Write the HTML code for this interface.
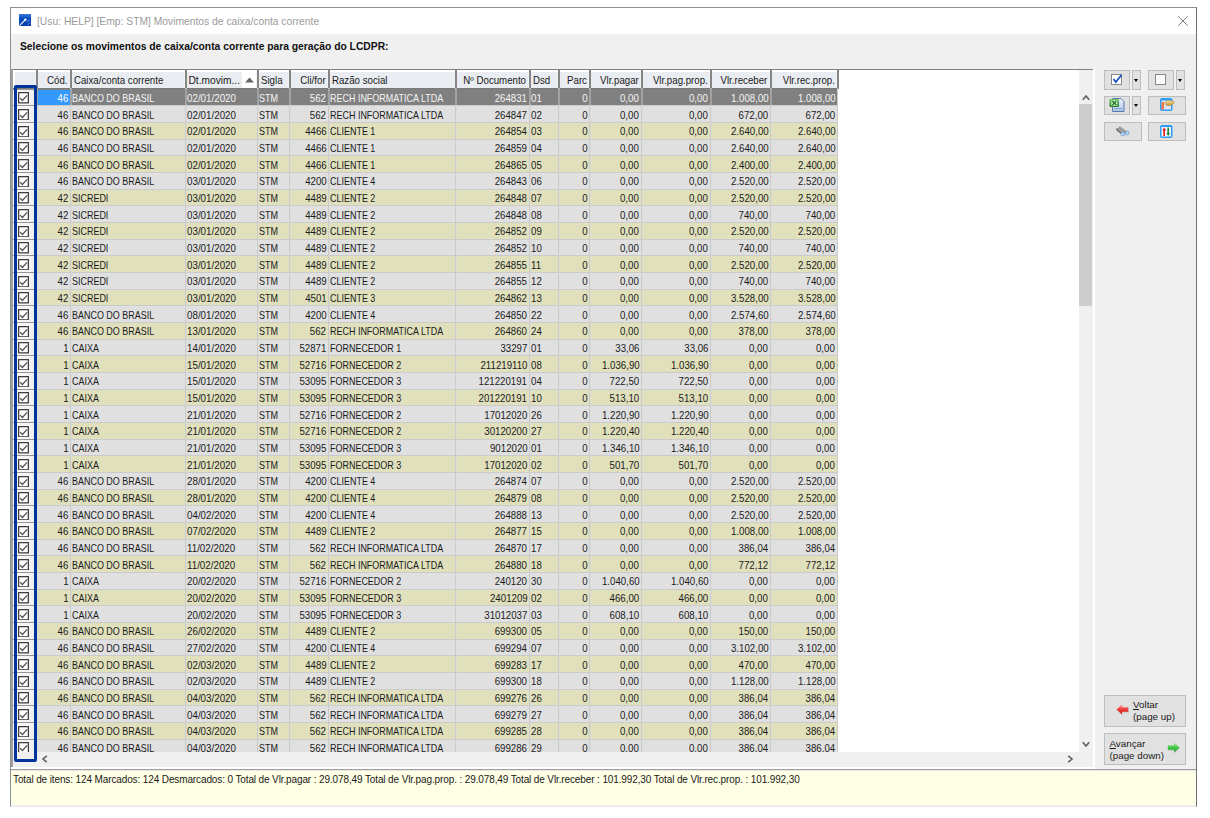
<!DOCTYPE html>
<html><head><meta charset="utf-8"><title>Movimentos</title>
<style>
*{box-sizing:border-box}
html,body{margin:0;padding:0}
body{width:1210px;height:818px;position:relative;overflow:hidden;background:#fff;font-family:"Liberation Sans",sans-serif;}
.a{position:absolute}
.t{position:absolute;white-space:nowrap;font-size:10.2px}
.t span{display:inline-block}
.btn{position:absolute;background:#e1e1e1;border:1px solid #bdbdbd}
.dd:after{content:"";position:absolute;left:50%;top:50%;margin-left:-3px;margin-top:-1.5px;border-left:2.5px solid transparent;border-right:2.5px solid transparent;border-top:3px solid #000}
</style></head><body>

<div class="a" style="left:10px;top:7px;width:1187px;height:800px;border-style:solid;border-width:1px;border-color:#8b9096 #707070 #e8e8e8 #8b9096;background:#f0f0f0"></div>
<div class="a" style="left:11px;top:8px;width:1185px;height:26px;background:#fff"></div>
<svg class="a" style="left:19px;top:14px" width="12" height="12" viewBox="0 0 12 12">
<defs><linearGradient id="gi" x1="0" y1="0" x2="0" y2="1"><stop offset="0" stop-color="#3a7ae0"/><stop offset="0.35" stop-color="#0a50c0"/><stop offset="1" stop-color="#003aa8"/></linearGradient></defs>
<path d="M0 0 H12 V12 H2 Q0 12 0 10 Z" fill="url(#gi)"/>
<path d="M1.3 10.8 L6.2 5.8" stroke="#fff" stroke-width="1.1"/><circle cx="6.4" cy="5.6" r="1.2" fill="#fff"/>
<path d="M8.2 8.2 L10.3 5.8 M8.6 11 L10.8 8.8" stroke="#8fb8ee" stroke-width="0.8"/>
</svg>
<div class="a" style="left:37px;top:16px;font-size:10.3px;line-height:12px;color:#9b9b9b;white-space:nowrap">[Usu: HELP] [Emp: STM] Movimentos de caixa/conta corrente</div>
<svg class="a" style="left:1178px;top:16px" width="10" height="10" viewBox="0 0 10 10"><path d="M0.3 0.3 L9.7 9.7 M9.7 0.3 L0.3 9.7" stroke="#7a7a7a" stroke-width="1"/></svg>
<div class="a" style="left:20px;top:41px;font-size:10.3px;line-height:12px;font-weight:bold;color:#111;white-space:nowrap">Selecione os movimentos de caixa/conta corrente para geração do LCDPR:</div>
<div class="a" style="left:11px;top:69px;width:1083px;height:1px;background:#828282"></div>
<div class="a" style="left:11px;top:69px;width:2px;height:699px;background:#a0a0a0"></div>
<div class="a" style="left:1093px;top:69px;width:2px;height:700px;background:#fff"></div>
<div class="a" style="left:11px;top:767px;width:1084px;height:2px;background:#fff"></div>
<div class="a" style="left:13px;top:70px;width:1066px;height:682px;background:#fff"></div>
<div class="a" style="left:13px;top:70px;width:825px;height:19px;background:#fff"></div>
<div class="a" style="left:14.5px;top:72px;width:21px;height:16px;background:#e9ecf0"></div>
<div class="a" style="left:35px;top:72px;width:1px;height:16px;background:#f2f2f2"></div>
<div class="a" style="left:36px;top:70px;width:1.5px;height:19px;background:#858585"></div>
<div class="a" style="left:37.5px;top:72px;width:32px;height:16px;background:#e9ecf0"></div>
<div class="a" style="left:69px;top:72px;width:1px;height:16px;background:#f2f2f2"></div>
<div class="a" style="left:70px;top:70px;width:1.5px;height:19px;background:#858585"></div>
<div class="a" style="left:71.5px;top:72px;width:113px;height:16px;background:#e9ecf0"></div>
<div class="a" style="left:184px;top:72px;width:1px;height:16px;background:#f2f2f2"></div>
<div class="a" style="left:185px;top:70px;width:1.5px;height:19px;background:#858585"></div>
<div class="a" style="left:186.5px;top:72px;width:70px;height:16px;background:#e9ecf0"></div>
<div class="a" style="left:256px;top:72px;width:1px;height:16px;background:#f2f2f2"></div>
<div class="a" style="left:257px;top:70px;width:1.5px;height:19px;background:#858585"></div>
<div class="a" style="left:258.5px;top:72px;width:30px;height:16px;background:#e9ecf0"></div>
<div class="a" style="left:288px;top:72px;width:1px;height:16px;background:#f2f2f2"></div>
<div class="a" style="left:289px;top:70px;width:1.5px;height:19px;background:#858585"></div>
<div class="a" style="left:290.5px;top:72px;width:37px;height:16px;background:#e9ecf0"></div>
<div class="a" style="left:327px;top:72px;width:1px;height:16px;background:#f2f2f2"></div>
<div class="a" style="left:328px;top:70px;width:1.5px;height:19px;background:#858585"></div>
<div class="a" style="left:329.5px;top:72px;width:125px;height:16px;background:#e9ecf0"></div>
<div class="a" style="left:454px;top:72px;width:1px;height:16px;background:#f2f2f2"></div>
<div class="a" style="left:455px;top:70px;width:1.5px;height:19px;background:#858585"></div>
<div class="a" style="left:456.5px;top:72px;width:72px;height:16px;background:#e9ecf0"></div>
<div class="a" style="left:528px;top:72px;width:1px;height:16px;background:#f2f2f2"></div>
<div class="a" style="left:529px;top:70px;width:1.5px;height:19px;background:#858585"></div>
<div class="a" style="left:530.5px;top:72px;width:27px;height:16px;background:#e9ecf0"></div>
<div class="a" style="left:557px;top:72px;width:1px;height:16px;background:#f2f2f2"></div>
<div class="a" style="left:558px;top:70px;width:1.5px;height:19px;background:#858585"></div>
<div class="a" style="left:559.5px;top:72px;width:29px;height:16px;background:#e9ecf0"></div>
<div class="a" style="left:588px;top:72px;width:1px;height:16px;background:#f2f2f2"></div>
<div class="a" style="left:589px;top:70px;width:1.5px;height:19px;background:#858585"></div>
<div class="a" style="left:590.5px;top:72px;width:50px;height:16px;background:#e9ecf0"></div>
<div class="a" style="left:640px;top:72px;width:1px;height:16px;background:#f2f2f2"></div>
<div class="a" style="left:641px;top:70px;width:1.5px;height:19px;background:#858585"></div>
<div class="a" style="left:642.5px;top:72px;width:67px;height:16px;background:#e9ecf0"></div>
<div class="a" style="left:709px;top:72px;width:1px;height:16px;background:#f2f2f2"></div>
<div class="a" style="left:710px;top:70px;width:1.5px;height:19px;background:#858585"></div>
<div class="a" style="left:711.5px;top:72px;width:58px;height:16px;background:#e9ecf0"></div>
<div class="a" style="left:769px;top:72px;width:1px;height:16px;background:#f2f2f2"></div>
<div class="a" style="left:770px;top:70px;width:1.5px;height:19px;background:#858585"></div>
<div class="a" style="left:771.5px;top:72px;width:65px;height:16px;background:#e9ecf0"></div>
<div class="a" style="left:836px;top:72px;width:1px;height:16px;background:#f2f2f2"></div>
<div class="a" style="left:837px;top:70px;width:1.5px;height:19px;background:#858585"></div>
<div class="a" style="left:13px;top:88px;width:825px;height:1px;background:#7a7a7a"></div>
<div class="a" style="left:242px;top:72px;width:14px;height:16px;background:#fff"></div>
<svg class="a" style="left:245px;top:77px" width="9" height="6" viewBox="0 0 9 6"><path d="M0 5.5 L4.5 0.5 L9 5.5 Z" fill="#666"/></svg>
<div class="t r" style="right:1142.5px;top:71px;height:18px;line-height:20px;color:#1a1a1a"><span style="transform:scaleX(0.95);transform-origin:100% 0">Cód.</span></div>
<div class="t" style="left:73.5px;top:71px;height:18px;line-height:20px;color:#1a1a1a"><span style="transform:scaleX(0.95);transform-origin:0 0">Caixa/conta corrente</span></div>
<div class="t" style="left:188.5px;top:71px;height:18px;line-height:20px;color:#1a1a1a"><span style="transform:scaleX(1.0);transform-origin:0 0">Dt.movim...</span></div>
<div class="t" style="left:260.5px;top:71px;height:18px;line-height:20px;color:#1a1a1a"><span style="transform:scaleX(0.95);transform-origin:0 0">Sigla</span></div>
<div class="t r" style="right:884.5px;top:71px;height:18px;line-height:20px;color:#1a1a1a"><span style="transform:scaleX(0.95);transform-origin:100% 0">Cli/for</span></div>
<div class="t" style="left:331.5px;top:71px;height:18px;line-height:20px;color:#1a1a1a"><span style="transform:scaleX(0.95);transform-origin:0 0">Razão social</span></div>
<div class="t r" style="right:683.5px;top:71px;height:18px;line-height:20px;color:#1a1a1a"><span style="transform:scaleX(0.95);transform-origin:100% 0">Nº Documento</span></div>
<div class="t" style="left:532.5px;top:71px;height:18px;line-height:20px;color:#1a1a1a"><span style="transform:scaleX(0.95);transform-origin:0 0">Dsd</span></div>
<div class="t r" style="right:623.5px;top:71px;height:18px;line-height:20px;color:#1a1a1a"><span style="transform:scaleX(0.95);transform-origin:100% 0">Parc</span></div>
<div class="t r" style="right:571.5px;top:71px;height:18px;line-height:20px;color:#1a1a1a"><span style="transform:scaleX(0.95);transform-origin:100% 0">Vlr.pagar</span></div>
<div class="t r" style="right:502.5px;top:71px;height:18px;line-height:20px;color:#1a1a1a"><span style="transform:scaleX(0.95);transform-origin:100% 0">Vlr.pag.prop.</span></div>
<div class="t r" style="right:442.5px;top:71px;height:18px;line-height:20px;color:#1a1a1a"><span style="transform:scaleX(0.95);transform-origin:100% 0">Vlr.receber</span></div>
<div class="t r" style="right:375.5px;top:71px;height:18px;line-height:20px;color:#1a1a1a"><span style="transform:scaleX(0.95);transform-origin:100% 0">Vlr.rec.prop.</span></div>
<div class="a" style="left:13px;top:88px;width:1066px;height:664px;overflow:hidden">
<div class="a" style="left:0;top:0.67px;width:23px;height:16.667px;background:linear-gradient(90deg,#fcfcfc,#eeeeee);border-top:1.3px solid #959595"></div>
<svg class="a" style="left:5px;top:4.27px" width="11" height="11.5" viewBox="0 0 11 11.5"><rect x="0.65" y="0.65" width="9.7" height="10.2" fill="#fff" stroke="#3c3c3c" stroke-width="1.25"/><path d="M2.1 6.1 L4.4 8.5 L9.1 3.4" fill="none" stroke="#4e4e4e" stroke-width="1.25"/></svg>
<div class="a" style="left:23px;top:0.67px;width:801px;height:16.667px;background:#808080;border-top:1px solid #808080"></div>
<div class="a" style="left:23px;top:1.67px;width:34px;height:15.667px;background:#3399ff"></div>
<div class="t r" style="right:1010.7px;top:2.87px;height:16px;line-height:16px;color:#fff"><span style="transform:scaleX(0.95);transform-origin:100% 0">46</span></div>
<div class="t" style="left:59px;top:2.87px;height:16px;line-height:16px;color:#f4f4f4"><span style="transform:scaleX(0.88);transform-origin:0 0">BANCO DO BRASIL</span></div>
<div class="t" style="left:174px;top:2.87px;height:16px;line-height:16px;color:#f4f4f4"><span style="transform:scaleX(0.96);transform-origin:0 0">02/01/2020</span></div>
<div class="t" style="left:246px;top:2.87px;height:16px;line-height:16px;color:#f4f4f4"><span style="transform:scaleX(0.88);transform-origin:0 0">STM</span></div>
<div class="t r" style="right:752.7px;top:2.87px;height:16px;line-height:16px;color:#f4f4f4"><span style="transform:scaleX(0.95);transform-origin:100% 0">562</span></div>
<div class="t" style="left:317px;top:2.87px;height:16px;line-height:16px;color:#f4f4f4"><span style="transform:scaleX(0.88);transform-origin:0 0">RECH INFORMATICA LTDA</span></div>
<div class="t r" style="right:551.7px;top:2.87px;height:16px;line-height:16px;color:#f4f4f4"><span style="transform:scaleX(0.95);transform-origin:100% 0">264831</span></div>
<div class="t" style="left:518px;top:2.87px;height:16px;line-height:16px;color:#f4f4f4"><span style="transform:scaleX(0.95);transform-origin:0 0">01</span></div>
<div class="t r" style="right:491.70000000000005px;top:2.87px;height:16px;line-height:16px;color:#f4f4f4"><span style="transform:scaleX(0.95);transform-origin:100% 0">0</span></div>
<div class="t r" style="right:439.70000000000005px;top:2.87px;height:16px;line-height:16px;color:#f4f4f4"><span style="transform:scaleX(0.95);transform-origin:100% 0">0,00</span></div>
<div class="t r" style="right:370.70000000000005px;top:2.87px;height:16px;line-height:16px;color:#f4f4f4"><span style="transform:scaleX(0.95);transform-origin:100% 0">0,00</span></div>
<div class="t r" style="right:310.70000000000005px;top:2.87px;height:16px;line-height:16px;color:#f4f4f4"><span style="transform:scaleX(0.95);transform-origin:100% 0">1.008,00</span></div>
<div class="t r" style="right:243.70000000000005px;top:2.87px;height:16px;line-height:16px;color:#f4f4f4"><span style="transform:scaleX(0.95);transform-origin:100% 0">1.008,00</span></div>
<div class="a" style="left:0;top:17.34px;width:23px;height:16.667px;background:linear-gradient(90deg,#fcfcfc,#eeeeee);border-top:1.3px solid #959595"></div>
<svg class="a" style="left:5px;top:20.94px" width="11" height="11.5" viewBox="0 0 11 11.5"><rect x="0.65" y="0.65" width="9.7" height="10.2" fill="#fff" stroke="#3c3c3c" stroke-width="1.25"/><path d="M2.1 6.1 L4.4 8.5 L9.1 3.4" fill="none" stroke="#4e4e4e" stroke-width="1.25"/></svg>
<div class="a" style="left:23px;top:17.34px;width:801px;height:16.667px;background:#e0e0e0;border-top:1px solid #cbcbcb"></div>
<div class="t r" style="right:1010.7px;top:19.54px;height:16px;line-height:16px;color:#1a1a1a"><span style="transform:scaleX(0.95);transform-origin:100% 0">46</span></div>
<div class="t" style="left:59px;top:19.54px;height:16px;line-height:16px;color:#1a1a1a"><span style="transform:scaleX(0.88);transform-origin:0 0">BANCO DO BRASIL</span></div>
<div class="t" style="left:174px;top:19.54px;height:16px;line-height:16px;color:#1a1a1a"><span style="transform:scaleX(0.96);transform-origin:0 0">02/01/2020</span></div>
<div class="t" style="left:246px;top:19.54px;height:16px;line-height:16px;color:#1a1a1a"><span style="transform:scaleX(0.88);transform-origin:0 0">STM</span></div>
<div class="t r" style="right:752.7px;top:19.54px;height:16px;line-height:16px;color:#1a1a1a"><span style="transform:scaleX(0.95);transform-origin:100% 0">562</span></div>
<div class="t" style="left:317px;top:19.54px;height:16px;line-height:16px;color:#1a1a1a"><span style="transform:scaleX(0.88);transform-origin:0 0">RECH INFORMATICA LTDA</span></div>
<div class="t r" style="right:551.7px;top:19.54px;height:16px;line-height:16px;color:#1a1a1a"><span style="transform:scaleX(0.95);transform-origin:100% 0">264847</span></div>
<div class="t" style="left:518px;top:19.54px;height:16px;line-height:16px;color:#1a1a1a"><span style="transform:scaleX(0.95);transform-origin:0 0">02</span></div>
<div class="t r" style="right:491.70000000000005px;top:19.54px;height:16px;line-height:16px;color:#1a1a1a"><span style="transform:scaleX(0.95);transform-origin:100% 0">0</span></div>
<div class="t r" style="right:439.70000000000005px;top:19.54px;height:16px;line-height:16px;color:#1a1a1a"><span style="transform:scaleX(0.95);transform-origin:100% 0">0,00</span></div>
<div class="t r" style="right:370.70000000000005px;top:19.54px;height:16px;line-height:16px;color:#1a1a1a"><span style="transform:scaleX(0.95);transform-origin:100% 0">0,00</span></div>
<div class="t r" style="right:310.70000000000005px;top:19.54px;height:16px;line-height:16px;color:#1a1a1a"><span style="transform:scaleX(0.95);transform-origin:100% 0">672,00</span></div>
<div class="t r" style="right:243.70000000000005px;top:19.54px;height:16px;line-height:16px;color:#1a1a1a"><span style="transform:scaleX(0.95);transform-origin:100% 0">672,00</span></div>
<div class="a" style="left:0;top:34.00px;width:23px;height:16.667px;background:linear-gradient(90deg,#fcfcfc,#eeeeee);border-top:1.3px solid #959595"></div>
<svg class="a" style="left:5px;top:37.60px" width="11" height="11.5" viewBox="0 0 11 11.5"><rect x="0.65" y="0.65" width="9.7" height="10.2" fill="#fff" stroke="#3c3c3c" stroke-width="1.25"/><path d="M2.1 6.1 L4.4 8.5 L9.1 3.4" fill="none" stroke="#4e4e4e" stroke-width="1.25"/></svg>
<div class="a" style="left:23px;top:34.00px;width:801px;height:16.667px;background:#e0e0bc;border-top:1px solid #cbcbcb"></div>
<div class="t r" style="right:1010.7px;top:36.20px;height:16px;line-height:16px;color:#1a1a1a"><span style="transform:scaleX(0.95);transform-origin:100% 0">46</span></div>
<div class="t" style="left:59px;top:36.20px;height:16px;line-height:16px;color:#1a1a1a"><span style="transform:scaleX(0.88);transform-origin:0 0">BANCO DO BRASIL</span></div>
<div class="t" style="left:174px;top:36.20px;height:16px;line-height:16px;color:#1a1a1a"><span style="transform:scaleX(0.96);transform-origin:0 0">02/01/2020</span></div>
<div class="t" style="left:246px;top:36.20px;height:16px;line-height:16px;color:#1a1a1a"><span style="transform:scaleX(0.88);transform-origin:0 0">STM</span></div>
<div class="t r" style="right:752.7px;top:36.20px;height:16px;line-height:16px;color:#1a1a1a"><span style="transform:scaleX(0.95);transform-origin:100% 0">4466</span></div>
<div class="t" style="left:317px;top:36.20px;height:16px;line-height:16px;color:#1a1a1a"><span style="transform:scaleX(0.88);transform-origin:0 0">CLIENTE 1</span></div>
<div class="t r" style="right:551.7px;top:36.20px;height:16px;line-height:16px;color:#1a1a1a"><span style="transform:scaleX(0.95);transform-origin:100% 0">264854</span></div>
<div class="t" style="left:518px;top:36.20px;height:16px;line-height:16px;color:#1a1a1a"><span style="transform:scaleX(0.95);transform-origin:0 0">03</span></div>
<div class="t r" style="right:491.70000000000005px;top:36.20px;height:16px;line-height:16px;color:#1a1a1a"><span style="transform:scaleX(0.95);transform-origin:100% 0">0</span></div>
<div class="t r" style="right:439.70000000000005px;top:36.20px;height:16px;line-height:16px;color:#1a1a1a"><span style="transform:scaleX(0.95);transform-origin:100% 0">0,00</span></div>
<div class="t r" style="right:370.70000000000005px;top:36.20px;height:16px;line-height:16px;color:#1a1a1a"><span style="transform:scaleX(0.95);transform-origin:100% 0">0,00</span></div>
<div class="t r" style="right:310.70000000000005px;top:36.20px;height:16px;line-height:16px;color:#1a1a1a"><span style="transform:scaleX(0.95);transform-origin:100% 0">2.640,00</span></div>
<div class="t r" style="right:243.70000000000005px;top:36.20px;height:16px;line-height:16px;color:#1a1a1a"><span style="transform:scaleX(0.95);transform-origin:100% 0">2.640,00</span></div>
<div class="a" style="left:0;top:50.67px;width:23px;height:16.667px;background:linear-gradient(90deg,#fcfcfc,#eeeeee);border-top:1.3px solid #959595"></div>
<svg class="a" style="left:5px;top:54.27px" width="11" height="11.5" viewBox="0 0 11 11.5"><rect x="0.65" y="0.65" width="9.7" height="10.2" fill="#fff" stroke="#3c3c3c" stroke-width="1.25"/><path d="M2.1 6.1 L4.4 8.5 L9.1 3.4" fill="none" stroke="#4e4e4e" stroke-width="1.25"/></svg>
<div class="a" style="left:23px;top:50.67px;width:801px;height:16.667px;background:#e0e0e0;border-top:1px solid #cbcbcb"></div>
<div class="t r" style="right:1010.7px;top:52.87px;height:16px;line-height:16px;color:#1a1a1a"><span style="transform:scaleX(0.95);transform-origin:100% 0">46</span></div>
<div class="t" style="left:59px;top:52.87px;height:16px;line-height:16px;color:#1a1a1a"><span style="transform:scaleX(0.88);transform-origin:0 0">BANCO DO BRASIL</span></div>
<div class="t" style="left:174px;top:52.87px;height:16px;line-height:16px;color:#1a1a1a"><span style="transform:scaleX(0.96);transform-origin:0 0">02/01/2020</span></div>
<div class="t" style="left:246px;top:52.87px;height:16px;line-height:16px;color:#1a1a1a"><span style="transform:scaleX(0.88);transform-origin:0 0">STM</span></div>
<div class="t r" style="right:752.7px;top:52.87px;height:16px;line-height:16px;color:#1a1a1a"><span style="transform:scaleX(0.95);transform-origin:100% 0">4466</span></div>
<div class="t" style="left:317px;top:52.87px;height:16px;line-height:16px;color:#1a1a1a"><span style="transform:scaleX(0.88);transform-origin:0 0">CLIENTE 1</span></div>
<div class="t r" style="right:551.7px;top:52.87px;height:16px;line-height:16px;color:#1a1a1a"><span style="transform:scaleX(0.95);transform-origin:100% 0">264859</span></div>
<div class="t" style="left:518px;top:52.87px;height:16px;line-height:16px;color:#1a1a1a"><span style="transform:scaleX(0.95);transform-origin:0 0">04</span></div>
<div class="t r" style="right:491.70000000000005px;top:52.87px;height:16px;line-height:16px;color:#1a1a1a"><span style="transform:scaleX(0.95);transform-origin:100% 0">0</span></div>
<div class="t r" style="right:439.70000000000005px;top:52.87px;height:16px;line-height:16px;color:#1a1a1a"><span style="transform:scaleX(0.95);transform-origin:100% 0">0,00</span></div>
<div class="t r" style="right:370.70000000000005px;top:52.87px;height:16px;line-height:16px;color:#1a1a1a"><span style="transform:scaleX(0.95);transform-origin:100% 0">0,00</span></div>
<div class="t r" style="right:310.70000000000005px;top:52.87px;height:16px;line-height:16px;color:#1a1a1a"><span style="transform:scaleX(0.95);transform-origin:100% 0">2.640,00</span></div>
<div class="t r" style="right:243.70000000000005px;top:52.87px;height:16px;line-height:16px;color:#1a1a1a"><span style="transform:scaleX(0.95);transform-origin:100% 0">2.640,00</span></div>
<div class="a" style="left:0;top:67.34px;width:23px;height:16.667px;background:linear-gradient(90deg,#fcfcfc,#eeeeee);border-top:1.3px solid #959595"></div>
<svg class="a" style="left:5px;top:70.94px" width="11" height="11.5" viewBox="0 0 11 11.5"><rect x="0.65" y="0.65" width="9.7" height="10.2" fill="#fff" stroke="#3c3c3c" stroke-width="1.25"/><path d="M2.1 6.1 L4.4 8.5 L9.1 3.4" fill="none" stroke="#4e4e4e" stroke-width="1.25"/></svg>
<div class="a" style="left:23px;top:67.34px;width:801px;height:16.667px;background:#e0e0bc;border-top:1px solid #cbcbcb"></div>
<div class="t r" style="right:1010.7px;top:69.54px;height:16px;line-height:16px;color:#1a1a1a"><span style="transform:scaleX(0.95);transform-origin:100% 0">46</span></div>
<div class="t" style="left:59px;top:69.54px;height:16px;line-height:16px;color:#1a1a1a"><span style="transform:scaleX(0.88);transform-origin:0 0">BANCO DO BRASIL</span></div>
<div class="t" style="left:174px;top:69.54px;height:16px;line-height:16px;color:#1a1a1a"><span style="transform:scaleX(0.96);transform-origin:0 0">02/01/2020</span></div>
<div class="t" style="left:246px;top:69.54px;height:16px;line-height:16px;color:#1a1a1a"><span style="transform:scaleX(0.88);transform-origin:0 0">STM</span></div>
<div class="t r" style="right:752.7px;top:69.54px;height:16px;line-height:16px;color:#1a1a1a"><span style="transform:scaleX(0.95);transform-origin:100% 0">4466</span></div>
<div class="t" style="left:317px;top:69.54px;height:16px;line-height:16px;color:#1a1a1a"><span style="transform:scaleX(0.88);transform-origin:0 0">CLIENTE 1</span></div>
<div class="t r" style="right:551.7px;top:69.54px;height:16px;line-height:16px;color:#1a1a1a"><span style="transform:scaleX(0.95);transform-origin:100% 0">264865</span></div>
<div class="t" style="left:518px;top:69.54px;height:16px;line-height:16px;color:#1a1a1a"><span style="transform:scaleX(0.95);transform-origin:0 0">05</span></div>
<div class="t r" style="right:491.70000000000005px;top:69.54px;height:16px;line-height:16px;color:#1a1a1a"><span style="transform:scaleX(0.95);transform-origin:100% 0">0</span></div>
<div class="t r" style="right:439.70000000000005px;top:69.54px;height:16px;line-height:16px;color:#1a1a1a"><span style="transform:scaleX(0.95);transform-origin:100% 0">0,00</span></div>
<div class="t r" style="right:370.70000000000005px;top:69.54px;height:16px;line-height:16px;color:#1a1a1a"><span style="transform:scaleX(0.95);transform-origin:100% 0">0,00</span></div>
<div class="t r" style="right:310.70000000000005px;top:69.54px;height:16px;line-height:16px;color:#1a1a1a"><span style="transform:scaleX(0.95);transform-origin:100% 0">2.400,00</span></div>
<div class="t r" style="right:243.70000000000005px;top:69.54px;height:16px;line-height:16px;color:#1a1a1a"><span style="transform:scaleX(0.95);transform-origin:100% 0">2.400,00</span></div>
<div class="a" style="left:0;top:84.00px;width:23px;height:16.667px;background:linear-gradient(90deg,#fcfcfc,#eeeeee);border-top:1.3px solid #959595"></div>
<svg class="a" style="left:5px;top:87.60px" width="11" height="11.5" viewBox="0 0 11 11.5"><rect x="0.65" y="0.65" width="9.7" height="10.2" fill="#fff" stroke="#3c3c3c" stroke-width="1.25"/><path d="M2.1 6.1 L4.4 8.5 L9.1 3.4" fill="none" stroke="#4e4e4e" stroke-width="1.25"/></svg>
<div class="a" style="left:23px;top:84.00px;width:801px;height:16.667px;background:#e0e0e0;border-top:1px solid #cbcbcb"></div>
<div class="t r" style="right:1010.7px;top:86.20px;height:16px;line-height:16px;color:#1a1a1a"><span style="transform:scaleX(0.95);transform-origin:100% 0">46</span></div>
<div class="t" style="left:59px;top:86.20px;height:16px;line-height:16px;color:#1a1a1a"><span style="transform:scaleX(0.88);transform-origin:0 0">BANCO DO BRASIL</span></div>
<div class="t" style="left:174px;top:86.20px;height:16px;line-height:16px;color:#1a1a1a"><span style="transform:scaleX(0.96);transform-origin:0 0">03/01/2020</span></div>
<div class="t" style="left:246px;top:86.20px;height:16px;line-height:16px;color:#1a1a1a"><span style="transform:scaleX(0.88);transform-origin:0 0">STM</span></div>
<div class="t r" style="right:752.7px;top:86.20px;height:16px;line-height:16px;color:#1a1a1a"><span style="transform:scaleX(0.95);transform-origin:100% 0">4200</span></div>
<div class="t" style="left:317px;top:86.20px;height:16px;line-height:16px;color:#1a1a1a"><span style="transform:scaleX(0.88);transform-origin:0 0">CLIENTE 4</span></div>
<div class="t r" style="right:551.7px;top:86.20px;height:16px;line-height:16px;color:#1a1a1a"><span style="transform:scaleX(0.95);transform-origin:100% 0">264843</span></div>
<div class="t" style="left:518px;top:86.20px;height:16px;line-height:16px;color:#1a1a1a"><span style="transform:scaleX(0.95);transform-origin:0 0">06</span></div>
<div class="t r" style="right:491.70000000000005px;top:86.20px;height:16px;line-height:16px;color:#1a1a1a"><span style="transform:scaleX(0.95);transform-origin:100% 0">0</span></div>
<div class="t r" style="right:439.70000000000005px;top:86.20px;height:16px;line-height:16px;color:#1a1a1a"><span style="transform:scaleX(0.95);transform-origin:100% 0">0,00</span></div>
<div class="t r" style="right:370.70000000000005px;top:86.20px;height:16px;line-height:16px;color:#1a1a1a"><span style="transform:scaleX(0.95);transform-origin:100% 0">0,00</span></div>
<div class="t r" style="right:310.70000000000005px;top:86.20px;height:16px;line-height:16px;color:#1a1a1a"><span style="transform:scaleX(0.95);transform-origin:100% 0">2.520,00</span></div>
<div class="t r" style="right:243.70000000000005px;top:86.20px;height:16px;line-height:16px;color:#1a1a1a"><span style="transform:scaleX(0.95);transform-origin:100% 0">2.520,00</span></div>
<div class="a" style="left:0;top:100.67px;width:23px;height:16.667px;background:linear-gradient(90deg,#fcfcfc,#eeeeee);border-top:1.3px solid #959595"></div>
<svg class="a" style="left:5px;top:104.27px" width="11" height="11.5" viewBox="0 0 11 11.5"><rect x="0.65" y="0.65" width="9.7" height="10.2" fill="#fff" stroke="#3c3c3c" stroke-width="1.25"/><path d="M2.1 6.1 L4.4 8.5 L9.1 3.4" fill="none" stroke="#4e4e4e" stroke-width="1.25"/></svg>
<div class="a" style="left:23px;top:100.67px;width:801px;height:16.667px;background:#e0e0bc;border-top:1px solid #cbcbcb"></div>
<div class="t r" style="right:1010.7px;top:102.87px;height:16px;line-height:16px;color:#1a1a1a"><span style="transform:scaleX(0.95);transform-origin:100% 0">42</span></div>
<div class="t" style="left:59px;top:102.87px;height:16px;line-height:16px;color:#1a1a1a"><span style="transform:scaleX(0.88);transform-origin:0 0">SICREDI</span></div>
<div class="t" style="left:174px;top:102.87px;height:16px;line-height:16px;color:#1a1a1a"><span style="transform:scaleX(0.96);transform-origin:0 0">03/01/2020</span></div>
<div class="t" style="left:246px;top:102.87px;height:16px;line-height:16px;color:#1a1a1a"><span style="transform:scaleX(0.88);transform-origin:0 0">STM</span></div>
<div class="t r" style="right:752.7px;top:102.87px;height:16px;line-height:16px;color:#1a1a1a"><span style="transform:scaleX(0.95);transform-origin:100% 0">4489</span></div>
<div class="t" style="left:317px;top:102.87px;height:16px;line-height:16px;color:#1a1a1a"><span style="transform:scaleX(0.88);transform-origin:0 0">CLIENTE 2</span></div>
<div class="t r" style="right:551.7px;top:102.87px;height:16px;line-height:16px;color:#1a1a1a"><span style="transform:scaleX(0.95);transform-origin:100% 0">264848</span></div>
<div class="t" style="left:518px;top:102.87px;height:16px;line-height:16px;color:#1a1a1a"><span style="transform:scaleX(0.95);transform-origin:0 0">07</span></div>
<div class="t r" style="right:491.70000000000005px;top:102.87px;height:16px;line-height:16px;color:#1a1a1a"><span style="transform:scaleX(0.95);transform-origin:100% 0">0</span></div>
<div class="t r" style="right:439.70000000000005px;top:102.87px;height:16px;line-height:16px;color:#1a1a1a"><span style="transform:scaleX(0.95);transform-origin:100% 0">0,00</span></div>
<div class="t r" style="right:370.70000000000005px;top:102.87px;height:16px;line-height:16px;color:#1a1a1a"><span style="transform:scaleX(0.95);transform-origin:100% 0">0,00</span></div>
<div class="t r" style="right:310.70000000000005px;top:102.87px;height:16px;line-height:16px;color:#1a1a1a"><span style="transform:scaleX(0.95);transform-origin:100% 0">2.520,00</span></div>
<div class="t r" style="right:243.70000000000005px;top:102.87px;height:16px;line-height:16px;color:#1a1a1a"><span style="transform:scaleX(0.95);transform-origin:100% 0">2.520,00</span></div>
<div class="a" style="left:0;top:117.34px;width:23px;height:16.667px;background:linear-gradient(90deg,#fcfcfc,#eeeeee);border-top:1.3px solid #959595"></div>
<svg class="a" style="left:5px;top:120.94px" width="11" height="11.5" viewBox="0 0 11 11.5"><rect x="0.65" y="0.65" width="9.7" height="10.2" fill="#fff" stroke="#3c3c3c" stroke-width="1.25"/><path d="M2.1 6.1 L4.4 8.5 L9.1 3.4" fill="none" stroke="#4e4e4e" stroke-width="1.25"/></svg>
<div class="a" style="left:23px;top:117.34px;width:801px;height:16.667px;background:#e0e0e0;border-top:1px solid #cbcbcb"></div>
<div class="t r" style="right:1010.7px;top:119.54px;height:16px;line-height:16px;color:#1a1a1a"><span style="transform:scaleX(0.95);transform-origin:100% 0">42</span></div>
<div class="t" style="left:59px;top:119.54px;height:16px;line-height:16px;color:#1a1a1a"><span style="transform:scaleX(0.88);transform-origin:0 0">SICREDI</span></div>
<div class="t" style="left:174px;top:119.54px;height:16px;line-height:16px;color:#1a1a1a"><span style="transform:scaleX(0.96);transform-origin:0 0">03/01/2020</span></div>
<div class="t" style="left:246px;top:119.54px;height:16px;line-height:16px;color:#1a1a1a"><span style="transform:scaleX(0.88);transform-origin:0 0">STM</span></div>
<div class="t r" style="right:752.7px;top:119.54px;height:16px;line-height:16px;color:#1a1a1a"><span style="transform:scaleX(0.95);transform-origin:100% 0">4489</span></div>
<div class="t" style="left:317px;top:119.54px;height:16px;line-height:16px;color:#1a1a1a"><span style="transform:scaleX(0.88);transform-origin:0 0">CLIENTE 2</span></div>
<div class="t r" style="right:551.7px;top:119.54px;height:16px;line-height:16px;color:#1a1a1a"><span style="transform:scaleX(0.95);transform-origin:100% 0">264848</span></div>
<div class="t" style="left:518px;top:119.54px;height:16px;line-height:16px;color:#1a1a1a"><span style="transform:scaleX(0.95);transform-origin:0 0">08</span></div>
<div class="t r" style="right:491.70000000000005px;top:119.54px;height:16px;line-height:16px;color:#1a1a1a"><span style="transform:scaleX(0.95);transform-origin:100% 0">0</span></div>
<div class="t r" style="right:439.70000000000005px;top:119.54px;height:16px;line-height:16px;color:#1a1a1a"><span style="transform:scaleX(0.95);transform-origin:100% 0">0,00</span></div>
<div class="t r" style="right:370.70000000000005px;top:119.54px;height:16px;line-height:16px;color:#1a1a1a"><span style="transform:scaleX(0.95);transform-origin:100% 0">0,00</span></div>
<div class="t r" style="right:310.70000000000005px;top:119.54px;height:16px;line-height:16px;color:#1a1a1a"><span style="transform:scaleX(0.95);transform-origin:100% 0">740,00</span></div>
<div class="t r" style="right:243.70000000000005px;top:119.54px;height:16px;line-height:16px;color:#1a1a1a"><span style="transform:scaleX(0.95);transform-origin:100% 0">740,00</span></div>
<div class="a" style="left:0;top:134.01px;width:23px;height:16.667px;background:linear-gradient(90deg,#fcfcfc,#eeeeee);border-top:1.3px solid #959595"></div>
<svg class="a" style="left:5px;top:137.61px" width="11" height="11.5" viewBox="0 0 11 11.5"><rect x="0.65" y="0.65" width="9.7" height="10.2" fill="#fff" stroke="#3c3c3c" stroke-width="1.25"/><path d="M2.1 6.1 L4.4 8.5 L9.1 3.4" fill="none" stroke="#4e4e4e" stroke-width="1.25"/></svg>
<div class="a" style="left:23px;top:134.01px;width:801px;height:16.667px;background:#e0e0bc;border-top:1px solid #cbcbcb"></div>
<div class="t r" style="right:1010.7px;top:136.21px;height:16px;line-height:16px;color:#1a1a1a"><span style="transform:scaleX(0.95);transform-origin:100% 0">42</span></div>
<div class="t" style="left:59px;top:136.21px;height:16px;line-height:16px;color:#1a1a1a"><span style="transform:scaleX(0.88);transform-origin:0 0">SICREDI</span></div>
<div class="t" style="left:174px;top:136.21px;height:16px;line-height:16px;color:#1a1a1a"><span style="transform:scaleX(0.96);transform-origin:0 0">03/01/2020</span></div>
<div class="t" style="left:246px;top:136.21px;height:16px;line-height:16px;color:#1a1a1a"><span style="transform:scaleX(0.88);transform-origin:0 0">STM</span></div>
<div class="t r" style="right:752.7px;top:136.21px;height:16px;line-height:16px;color:#1a1a1a"><span style="transform:scaleX(0.95);transform-origin:100% 0">4489</span></div>
<div class="t" style="left:317px;top:136.21px;height:16px;line-height:16px;color:#1a1a1a"><span style="transform:scaleX(0.88);transform-origin:0 0">CLIENTE 2</span></div>
<div class="t r" style="right:551.7px;top:136.21px;height:16px;line-height:16px;color:#1a1a1a"><span style="transform:scaleX(0.95);transform-origin:100% 0">264852</span></div>
<div class="t" style="left:518px;top:136.21px;height:16px;line-height:16px;color:#1a1a1a"><span style="transform:scaleX(0.95);transform-origin:0 0">09</span></div>
<div class="t r" style="right:491.70000000000005px;top:136.21px;height:16px;line-height:16px;color:#1a1a1a"><span style="transform:scaleX(0.95);transform-origin:100% 0">0</span></div>
<div class="t r" style="right:439.70000000000005px;top:136.21px;height:16px;line-height:16px;color:#1a1a1a"><span style="transform:scaleX(0.95);transform-origin:100% 0">0,00</span></div>
<div class="t r" style="right:370.70000000000005px;top:136.21px;height:16px;line-height:16px;color:#1a1a1a"><span style="transform:scaleX(0.95);transform-origin:100% 0">0,00</span></div>
<div class="t r" style="right:310.70000000000005px;top:136.21px;height:16px;line-height:16px;color:#1a1a1a"><span style="transform:scaleX(0.95);transform-origin:100% 0">2.520,00</span></div>
<div class="t r" style="right:243.70000000000005px;top:136.21px;height:16px;line-height:16px;color:#1a1a1a"><span style="transform:scaleX(0.95);transform-origin:100% 0">2.520,00</span></div>
<div class="a" style="left:0;top:150.67px;width:23px;height:16.667px;background:linear-gradient(90deg,#fcfcfc,#eeeeee);border-top:1.3px solid #959595"></div>
<svg class="a" style="left:5px;top:154.27px" width="11" height="11.5" viewBox="0 0 11 11.5"><rect x="0.65" y="0.65" width="9.7" height="10.2" fill="#fff" stroke="#3c3c3c" stroke-width="1.25"/><path d="M2.1 6.1 L4.4 8.5 L9.1 3.4" fill="none" stroke="#4e4e4e" stroke-width="1.25"/></svg>
<div class="a" style="left:23px;top:150.67px;width:801px;height:16.667px;background:#e0e0e0;border-top:1px solid #cbcbcb"></div>
<div class="t r" style="right:1010.7px;top:152.87px;height:16px;line-height:16px;color:#1a1a1a"><span style="transform:scaleX(0.95);transform-origin:100% 0">42</span></div>
<div class="t" style="left:59px;top:152.87px;height:16px;line-height:16px;color:#1a1a1a"><span style="transform:scaleX(0.88);transform-origin:0 0">SICREDI</span></div>
<div class="t" style="left:174px;top:152.87px;height:16px;line-height:16px;color:#1a1a1a"><span style="transform:scaleX(0.96);transform-origin:0 0">03/01/2020</span></div>
<div class="t" style="left:246px;top:152.87px;height:16px;line-height:16px;color:#1a1a1a"><span style="transform:scaleX(0.88);transform-origin:0 0">STM</span></div>
<div class="t r" style="right:752.7px;top:152.87px;height:16px;line-height:16px;color:#1a1a1a"><span style="transform:scaleX(0.95);transform-origin:100% 0">4489</span></div>
<div class="t" style="left:317px;top:152.87px;height:16px;line-height:16px;color:#1a1a1a"><span style="transform:scaleX(0.88);transform-origin:0 0">CLIENTE 2</span></div>
<div class="t r" style="right:551.7px;top:152.87px;height:16px;line-height:16px;color:#1a1a1a"><span style="transform:scaleX(0.95);transform-origin:100% 0">264852</span></div>
<div class="t" style="left:518px;top:152.87px;height:16px;line-height:16px;color:#1a1a1a"><span style="transform:scaleX(0.95);transform-origin:0 0">10</span></div>
<div class="t r" style="right:491.70000000000005px;top:152.87px;height:16px;line-height:16px;color:#1a1a1a"><span style="transform:scaleX(0.95);transform-origin:100% 0">0</span></div>
<div class="t r" style="right:439.70000000000005px;top:152.87px;height:16px;line-height:16px;color:#1a1a1a"><span style="transform:scaleX(0.95);transform-origin:100% 0">0,00</span></div>
<div class="t r" style="right:370.70000000000005px;top:152.87px;height:16px;line-height:16px;color:#1a1a1a"><span style="transform:scaleX(0.95);transform-origin:100% 0">0,00</span></div>
<div class="t r" style="right:310.70000000000005px;top:152.87px;height:16px;line-height:16px;color:#1a1a1a"><span style="transform:scaleX(0.95);transform-origin:100% 0">740,00</span></div>
<div class="t r" style="right:243.70000000000005px;top:152.87px;height:16px;line-height:16px;color:#1a1a1a"><span style="transform:scaleX(0.95);transform-origin:100% 0">740,00</span></div>
<div class="a" style="left:0;top:167.34px;width:23px;height:16.667px;background:linear-gradient(90deg,#fcfcfc,#eeeeee);border-top:1.3px solid #959595"></div>
<svg class="a" style="left:5px;top:170.94px" width="11" height="11.5" viewBox="0 0 11 11.5"><rect x="0.65" y="0.65" width="9.7" height="10.2" fill="#fff" stroke="#3c3c3c" stroke-width="1.25"/><path d="M2.1 6.1 L4.4 8.5 L9.1 3.4" fill="none" stroke="#4e4e4e" stroke-width="1.25"/></svg>
<div class="a" style="left:23px;top:167.34px;width:801px;height:16.667px;background:#e0e0bc;border-top:1px solid #cbcbcb"></div>
<div class="t r" style="right:1010.7px;top:169.54px;height:16px;line-height:16px;color:#1a1a1a"><span style="transform:scaleX(0.95);transform-origin:100% 0">42</span></div>
<div class="t" style="left:59px;top:169.54px;height:16px;line-height:16px;color:#1a1a1a"><span style="transform:scaleX(0.88);transform-origin:0 0">SICREDI</span></div>
<div class="t" style="left:174px;top:169.54px;height:16px;line-height:16px;color:#1a1a1a"><span style="transform:scaleX(0.96);transform-origin:0 0">03/01/2020</span></div>
<div class="t" style="left:246px;top:169.54px;height:16px;line-height:16px;color:#1a1a1a"><span style="transform:scaleX(0.88);transform-origin:0 0">STM</span></div>
<div class="t r" style="right:752.7px;top:169.54px;height:16px;line-height:16px;color:#1a1a1a"><span style="transform:scaleX(0.95);transform-origin:100% 0">4489</span></div>
<div class="t" style="left:317px;top:169.54px;height:16px;line-height:16px;color:#1a1a1a"><span style="transform:scaleX(0.88);transform-origin:0 0">CLIENTE 2</span></div>
<div class="t r" style="right:551.7px;top:169.54px;height:16px;line-height:16px;color:#1a1a1a"><span style="transform:scaleX(0.95);transform-origin:100% 0">264855</span></div>
<div class="t" style="left:518px;top:169.54px;height:16px;line-height:16px;color:#1a1a1a"><span style="transform:scaleX(0.95);transform-origin:0 0">11</span></div>
<div class="t r" style="right:491.70000000000005px;top:169.54px;height:16px;line-height:16px;color:#1a1a1a"><span style="transform:scaleX(0.95);transform-origin:100% 0">0</span></div>
<div class="t r" style="right:439.70000000000005px;top:169.54px;height:16px;line-height:16px;color:#1a1a1a"><span style="transform:scaleX(0.95);transform-origin:100% 0">0,00</span></div>
<div class="t r" style="right:370.70000000000005px;top:169.54px;height:16px;line-height:16px;color:#1a1a1a"><span style="transform:scaleX(0.95);transform-origin:100% 0">0,00</span></div>
<div class="t r" style="right:310.70000000000005px;top:169.54px;height:16px;line-height:16px;color:#1a1a1a"><span style="transform:scaleX(0.95);transform-origin:100% 0">2.520,00</span></div>
<div class="t r" style="right:243.70000000000005px;top:169.54px;height:16px;line-height:16px;color:#1a1a1a"><span style="transform:scaleX(0.95);transform-origin:100% 0">2.520,00</span></div>
<div class="a" style="left:0;top:184.01px;width:23px;height:16.667px;background:linear-gradient(90deg,#fcfcfc,#eeeeee);border-top:1.3px solid #959595"></div>
<svg class="a" style="left:5px;top:187.61px" width="11" height="11.5" viewBox="0 0 11 11.5"><rect x="0.65" y="0.65" width="9.7" height="10.2" fill="#fff" stroke="#3c3c3c" stroke-width="1.25"/><path d="M2.1 6.1 L4.4 8.5 L9.1 3.4" fill="none" stroke="#4e4e4e" stroke-width="1.25"/></svg>
<div class="a" style="left:23px;top:184.01px;width:801px;height:16.667px;background:#e0e0e0;border-top:1px solid #cbcbcb"></div>
<div class="t r" style="right:1010.7px;top:186.21px;height:16px;line-height:16px;color:#1a1a1a"><span style="transform:scaleX(0.95);transform-origin:100% 0">42</span></div>
<div class="t" style="left:59px;top:186.21px;height:16px;line-height:16px;color:#1a1a1a"><span style="transform:scaleX(0.88);transform-origin:0 0">SICREDI</span></div>
<div class="t" style="left:174px;top:186.21px;height:16px;line-height:16px;color:#1a1a1a"><span style="transform:scaleX(0.96);transform-origin:0 0">03/01/2020</span></div>
<div class="t" style="left:246px;top:186.21px;height:16px;line-height:16px;color:#1a1a1a"><span style="transform:scaleX(0.88);transform-origin:0 0">STM</span></div>
<div class="t r" style="right:752.7px;top:186.21px;height:16px;line-height:16px;color:#1a1a1a"><span style="transform:scaleX(0.95);transform-origin:100% 0">4489</span></div>
<div class="t" style="left:317px;top:186.21px;height:16px;line-height:16px;color:#1a1a1a"><span style="transform:scaleX(0.88);transform-origin:0 0">CLIENTE 2</span></div>
<div class="t r" style="right:551.7px;top:186.21px;height:16px;line-height:16px;color:#1a1a1a"><span style="transform:scaleX(0.95);transform-origin:100% 0">264855</span></div>
<div class="t" style="left:518px;top:186.21px;height:16px;line-height:16px;color:#1a1a1a"><span style="transform:scaleX(0.95);transform-origin:0 0">12</span></div>
<div class="t r" style="right:491.70000000000005px;top:186.21px;height:16px;line-height:16px;color:#1a1a1a"><span style="transform:scaleX(0.95);transform-origin:100% 0">0</span></div>
<div class="t r" style="right:439.70000000000005px;top:186.21px;height:16px;line-height:16px;color:#1a1a1a"><span style="transform:scaleX(0.95);transform-origin:100% 0">0,00</span></div>
<div class="t r" style="right:370.70000000000005px;top:186.21px;height:16px;line-height:16px;color:#1a1a1a"><span style="transform:scaleX(0.95);transform-origin:100% 0">0,00</span></div>
<div class="t r" style="right:310.70000000000005px;top:186.21px;height:16px;line-height:16px;color:#1a1a1a"><span style="transform:scaleX(0.95);transform-origin:100% 0">740,00</span></div>
<div class="t r" style="right:243.70000000000005px;top:186.21px;height:16px;line-height:16px;color:#1a1a1a"><span style="transform:scaleX(0.95);transform-origin:100% 0">740,00</span></div>
<div class="a" style="left:0;top:200.67px;width:23px;height:16.667px;background:linear-gradient(90deg,#fcfcfc,#eeeeee);border-top:1.3px solid #959595"></div>
<svg class="a" style="left:5px;top:204.27px" width="11" height="11.5" viewBox="0 0 11 11.5"><rect x="0.65" y="0.65" width="9.7" height="10.2" fill="#fff" stroke="#3c3c3c" stroke-width="1.25"/><path d="M2.1 6.1 L4.4 8.5 L9.1 3.4" fill="none" stroke="#4e4e4e" stroke-width="1.25"/></svg>
<div class="a" style="left:23px;top:200.67px;width:801px;height:16.667px;background:#e0e0bc;border-top:1px solid #cbcbcb"></div>
<div class="t r" style="right:1010.7px;top:202.87px;height:16px;line-height:16px;color:#1a1a1a"><span style="transform:scaleX(0.95);transform-origin:100% 0">42</span></div>
<div class="t" style="left:59px;top:202.87px;height:16px;line-height:16px;color:#1a1a1a"><span style="transform:scaleX(0.88);transform-origin:0 0">SICREDI</span></div>
<div class="t" style="left:174px;top:202.87px;height:16px;line-height:16px;color:#1a1a1a"><span style="transform:scaleX(0.96);transform-origin:0 0">03/01/2020</span></div>
<div class="t" style="left:246px;top:202.87px;height:16px;line-height:16px;color:#1a1a1a"><span style="transform:scaleX(0.88);transform-origin:0 0">STM</span></div>
<div class="t r" style="right:752.7px;top:202.87px;height:16px;line-height:16px;color:#1a1a1a"><span style="transform:scaleX(0.95);transform-origin:100% 0">4501</span></div>
<div class="t" style="left:317px;top:202.87px;height:16px;line-height:16px;color:#1a1a1a"><span style="transform:scaleX(0.88);transform-origin:0 0">CLIENTE 3</span></div>
<div class="t r" style="right:551.7px;top:202.87px;height:16px;line-height:16px;color:#1a1a1a"><span style="transform:scaleX(0.95);transform-origin:100% 0">264862</span></div>
<div class="t" style="left:518px;top:202.87px;height:16px;line-height:16px;color:#1a1a1a"><span style="transform:scaleX(0.95);transform-origin:0 0">13</span></div>
<div class="t r" style="right:491.70000000000005px;top:202.87px;height:16px;line-height:16px;color:#1a1a1a"><span style="transform:scaleX(0.95);transform-origin:100% 0">0</span></div>
<div class="t r" style="right:439.70000000000005px;top:202.87px;height:16px;line-height:16px;color:#1a1a1a"><span style="transform:scaleX(0.95);transform-origin:100% 0">0,00</span></div>
<div class="t r" style="right:370.70000000000005px;top:202.87px;height:16px;line-height:16px;color:#1a1a1a"><span style="transform:scaleX(0.95);transform-origin:100% 0">0,00</span></div>
<div class="t r" style="right:310.70000000000005px;top:202.87px;height:16px;line-height:16px;color:#1a1a1a"><span style="transform:scaleX(0.95);transform-origin:100% 0">3.528,00</span></div>
<div class="t r" style="right:243.70000000000005px;top:202.87px;height:16px;line-height:16px;color:#1a1a1a"><span style="transform:scaleX(0.95);transform-origin:100% 0">3.528,00</span></div>
<div class="a" style="left:0;top:217.34px;width:23px;height:16.667px;background:linear-gradient(90deg,#fcfcfc,#eeeeee);border-top:1.3px solid #959595"></div>
<svg class="a" style="left:5px;top:220.94px" width="11" height="11.5" viewBox="0 0 11 11.5"><rect x="0.65" y="0.65" width="9.7" height="10.2" fill="#fff" stroke="#3c3c3c" stroke-width="1.25"/><path d="M2.1 6.1 L4.4 8.5 L9.1 3.4" fill="none" stroke="#4e4e4e" stroke-width="1.25"/></svg>
<div class="a" style="left:23px;top:217.34px;width:801px;height:16.667px;background:#e0e0e0;border-top:1px solid #cbcbcb"></div>
<div class="t r" style="right:1010.7px;top:219.54px;height:16px;line-height:16px;color:#1a1a1a"><span style="transform:scaleX(0.95);transform-origin:100% 0">46</span></div>
<div class="t" style="left:59px;top:219.54px;height:16px;line-height:16px;color:#1a1a1a"><span style="transform:scaleX(0.88);transform-origin:0 0">BANCO DO BRASIL</span></div>
<div class="t" style="left:174px;top:219.54px;height:16px;line-height:16px;color:#1a1a1a"><span style="transform:scaleX(0.96);transform-origin:0 0">08/01/2020</span></div>
<div class="t" style="left:246px;top:219.54px;height:16px;line-height:16px;color:#1a1a1a"><span style="transform:scaleX(0.88);transform-origin:0 0">STM</span></div>
<div class="t r" style="right:752.7px;top:219.54px;height:16px;line-height:16px;color:#1a1a1a"><span style="transform:scaleX(0.95);transform-origin:100% 0">4200</span></div>
<div class="t" style="left:317px;top:219.54px;height:16px;line-height:16px;color:#1a1a1a"><span style="transform:scaleX(0.88);transform-origin:0 0">CLIENTE 4</span></div>
<div class="t r" style="right:551.7px;top:219.54px;height:16px;line-height:16px;color:#1a1a1a"><span style="transform:scaleX(0.95);transform-origin:100% 0">264850</span></div>
<div class="t" style="left:518px;top:219.54px;height:16px;line-height:16px;color:#1a1a1a"><span style="transform:scaleX(0.95);transform-origin:0 0">22</span></div>
<div class="t r" style="right:491.70000000000005px;top:219.54px;height:16px;line-height:16px;color:#1a1a1a"><span style="transform:scaleX(0.95);transform-origin:100% 0">0</span></div>
<div class="t r" style="right:439.70000000000005px;top:219.54px;height:16px;line-height:16px;color:#1a1a1a"><span style="transform:scaleX(0.95);transform-origin:100% 0">0,00</span></div>
<div class="t r" style="right:370.70000000000005px;top:219.54px;height:16px;line-height:16px;color:#1a1a1a"><span style="transform:scaleX(0.95);transform-origin:100% 0">0,00</span></div>
<div class="t r" style="right:310.70000000000005px;top:219.54px;height:16px;line-height:16px;color:#1a1a1a"><span style="transform:scaleX(0.95);transform-origin:100% 0">2.574,60</span></div>
<div class="t r" style="right:243.70000000000005px;top:219.54px;height:16px;line-height:16px;color:#1a1a1a"><span style="transform:scaleX(0.95);transform-origin:100% 0">2.574,60</span></div>
<div class="a" style="left:0;top:234.01px;width:23px;height:16.667px;background:linear-gradient(90deg,#fcfcfc,#eeeeee);border-top:1.3px solid #959595"></div>
<svg class="a" style="left:5px;top:237.61px" width="11" height="11.5" viewBox="0 0 11 11.5"><rect x="0.65" y="0.65" width="9.7" height="10.2" fill="#fff" stroke="#3c3c3c" stroke-width="1.25"/><path d="M2.1 6.1 L4.4 8.5 L9.1 3.4" fill="none" stroke="#4e4e4e" stroke-width="1.25"/></svg>
<div class="a" style="left:23px;top:234.01px;width:801px;height:16.667px;background:#e0e0bc;border-top:1px solid #cbcbcb"></div>
<div class="t r" style="right:1010.7px;top:236.21px;height:16px;line-height:16px;color:#1a1a1a"><span style="transform:scaleX(0.95);transform-origin:100% 0">46</span></div>
<div class="t" style="left:59px;top:236.21px;height:16px;line-height:16px;color:#1a1a1a"><span style="transform:scaleX(0.88);transform-origin:0 0">BANCO DO BRASIL</span></div>
<div class="t" style="left:174px;top:236.21px;height:16px;line-height:16px;color:#1a1a1a"><span style="transform:scaleX(0.96);transform-origin:0 0">13/01/2020</span></div>
<div class="t" style="left:246px;top:236.21px;height:16px;line-height:16px;color:#1a1a1a"><span style="transform:scaleX(0.88);transform-origin:0 0">STM</span></div>
<div class="t r" style="right:752.7px;top:236.21px;height:16px;line-height:16px;color:#1a1a1a"><span style="transform:scaleX(0.95);transform-origin:100% 0">562</span></div>
<div class="t" style="left:317px;top:236.21px;height:16px;line-height:16px;color:#1a1a1a"><span style="transform:scaleX(0.88);transform-origin:0 0">RECH INFORMATICA LTDA</span></div>
<div class="t r" style="right:551.7px;top:236.21px;height:16px;line-height:16px;color:#1a1a1a"><span style="transform:scaleX(0.95);transform-origin:100% 0">264860</span></div>
<div class="t" style="left:518px;top:236.21px;height:16px;line-height:16px;color:#1a1a1a"><span style="transform:scaleX(0.95);transform-origin:0 0">24</span></div>
<div class="t r" style="right:491.70000000000005px;top:236.21px;height:16px;line-height:16px;color:#1a1a1a"><span style="transform:scaleX(0.95);transform-origin:100% 0">0</span></div>
<div class="t r" style="right:439.70000000000005px;top:236.21px;height:16px;line-height:16px;color:#1a1a1a"><span style="transform:scaleX(0.95);transform-origin:100% 0">0,00</span></div>
<div class="t r" style="right:370.70000000000005px;top:236.21px;height:16px;line-height:16px;color:#1a1a1a"><span style="transform:scaleX(0.95);transform-origin:100% 0">0,00</span></div>
<div class="t r" style="right:310.70000000000005px;top:236.21px;height:16px;line-height:16px;color:#1a1a1a"><span style="transform:scaleX(0.95);transform-origin:100% 0">378,00</span></div>
<div class="t r" style="right:243.70000000000005px;top:236.21px;height:16px;line-height:16px;color:#1a1a1a"><span style="transform:scaleX(0.95);transform-origin:100% 0">378,00</span></div>
<div class="a" style="left:0;top:250.68px;width:23px;height:16.667px;background:linear-gradient(90deg,#fcfcfc,#eeeeee);border-top:1.3px solid #959595"></div>
<svg class="a" style="left:5px;top:254.28px" width="11" height="11.5" viewBox="0 0 11 11.5"><rect x="0.65" y="0.65" width="9.7" height="10.2" fill="#fff" stroke="#3c3c3c" stroke-width="1.25"/><path d="M2.1 6.1 L4.4 8.5 L9.1 3.4" fill="none" stroke="#4e4e4e" stroke-width="1.25"/></svg>
<div class="a" style="left:23px;top:250.68px;width:801px;height:16.667px;background:#e0e0e0;border-top:1px solid #cbcbcb"></div>
<div class="t r" style="right:1010.7px;top:252.88px;height:16px;line-height:16px;color:#1a1a1a"><span style="transform:scaleX(0.95);transform-origin:100% 0">1</span></div>
<div class="t" style="left:59px;top:252.88px;height:16px;line-height:16px;color:#1a1a1a"><span style="transform:scaleX(0.88);transform-origin:0 0">CAIXA</span></div>
<div class="t" style="left:174px;top:252.88px;height:16px;line-height:16px;color:#1a1a1a"><span style="transform:scaleX(0.96);transform-origin:0 0">14/01/2020</span></div>
<div class="t" style="left:246px;top:252.88px;height:16px;line-height:16px;color:#1a1a1a"><span style="transform:scaleX(0.88);transform-origin:0 0">STM</span></div>
<div class="t r" style="right:752.7px;top:252.88px;height:16px;line-height:16px;color:#1a1a1a"><span style="transform:scaleX(0.95);transform-origin:100% 0">52871</span></div>
<div class="t" style="left:317px;top:252.88px;height:16px;line-height:16px;color:#1a1a1a"><span style="transform:scaleX(0.88);transform-origin:0 0">FORNECEDOR 1</span></div>
<div class="t r" style="right:551.7px;top:252.88px;height:16px;line-height:16px;color:#1a1a1a"><span style="transform:scaleX(0.95);transform-origin:100% 0">33297</span></div>
<div class="t" style="left:518px;top:252.88px;height:16px;line-height:16px;color:#1a1a1a"><span style="transform:scaleX(0.95);transform-origin:0 0">01</span></div>
<div class="t r" style="right:491.70000000000005px;top:252.88px;height:16px;line-height:16px;color:#1a1a1a"><span style="transform:scaleX(0.95);transform-origin:100% 0">0</span></div>
<div class="t r" style="right:439.70000000000005px;top:252.88px;height:16px;line-height:16px;color:#1a1a1a"><span style="transform:scaleX(0.95);transform-origin:100% 0">33,06</span></div>
<div class="t r" style="right:370.70000000000005px;top:252.88px;height:16px;line-height:16px;color:#1a1a1a"><span style="transform:scaleX(0.95);transform-origin:100% 0">33,06</span></div>
<div class="t r" style="right:310.70000000000005px;top:252.88px;height:16px;line-height:16px;color:#1a1a1a"><span style="transform:scaleX(0.95);transform-origin:100% 0">0,00</span></div>
<div class="t r" style="right:243.70000000000005px;top:252.88px;height:16px;line-height:16px;color:#1a1a1a"><span style="transform:scaleX(0.95);transform-origin:100% 0">0,00</span></div>
<div class="a" style="left:0;top:267.34px;width:23px;height:16.667px;background:linear-gradient(90deg,#fcfcfc,#eeeeee);border-top:1.3px solid #959595"></div>
<svg class="a" style="left:5px;top:270.94px" width="11" height="11.5" viewBox="0 0 11 11.5"><rect x="0.65" y="0.65" width="9.7" height="10.2" fill="#fff" stroke="#3c3c3c" stroke-width="1.25"/><path d="M2.1 6.1 L4.4 8.5 L9.1 3.4" fill="none" stroke="#4e4e4e" stroke-width="1.25"/></svg>
<div class="a" style="left:23px;top:267.34px;width:801px;height:16.667px;background:#e0e0bc;border-top:1px solid #cbcbcb"></div>
<div class="t r" style="right:1010.7px;top:269.54px;height:16px;line-height:16px;color:#1a1a1a"><span style="transform:scaleX(0.95);transform-origin:100% 0">1</span></div>
<div class="t" style="left:59px;top:269.54px;height:16px;line-height:16px;color:#1a1a1a"><span style="transform:scaleX(0.88);transform-origin:0 0">CAIXA</span></div>
<div class="t" style="left:174px;top:269.54px;height:16px;line-height:16px;color:#1a1a1a"><span style="transform:scaleX(0.96);transform-origin:0 0">15/01/2020</span></div>
<div class="t" style="left:246px;top:269.54px;height:16px;line-height:16px;color:#1a1a1a"><span style="transform:scaleX(0.88);transform-origin:0 0">STM</span></div>
<div class="t r" style="right:752.7px;top:269.54px;height:16px;line-height:16px;color:#1a1a1a"><span style="transform:scaleX(0.95);transform-origin:100% 0">52716</span></div>
<div class="t" style="left:317px;top:269.54px;height:16px;line-height:16px;color:#1a1a1a"><span style="transform:scaleX(0.88);transform-origin:0 0">FORNECEDOR 2</span></div>
<div class="t r" style="right:551.7px;top:269.54px;height:16px;line-height:16px;color:#1a1a1a"><span style="transform:scaleX(0.95);transform-origin:100% 0">211219110</span></div>
<div class="t" style="left:518px;top:269.54px;height:16px;line-height:16px;color:#1a1a1a"><span style="transform:scaleX(0.95);transform-origin:0 0">08</span></div>
<div class="t r" style="right:491.70000000000005px;top:269.54px;height:16px;line-height:16px;color:#1a1a1a"><span style="transform:scaleX(0.95);transform-origin:100% 0">0</span></div>
<div class="t r" style="right:439.70000000000005px;top:269.54px;height:16px;line-height:16px;color:#1a1a1a"><span style="transform:scaleX(0.95);transform-origin:100% 0">1.036,90</span></div>
<div class="t r" style="right:370.70000000000005px;top:269.54px;height:16px;line-height:16px;color:#1a1a1a"><span style="transform:scaleX(0.95);transform-origin:100% 0">1.036,90</span></div>
<div class="t r" style="right:310.70000000000005px;top:269.54px;height:16px;line-height:16px;color:#1a1a1a"><span style="transform:scaleX(0.95);transform-origin:100% 0">0,00</span></div>
<div class="t r" style="right:243.70000000000005px;top:269.54px;height:16px;line-height:16px;color:#1a1a1a"><span style="transform:scaleX(0.95);transform-origin:100% 0">0,00</span></div>
<div class="a" style="left:0;top:284.01px;width:23px;height:16.667px;background:linear-gradient(90deg,#fcfcfc,#eeeeee);border-top:1.3px solid #959595"></div>
<svg class="a" style="left:5px;top:287.61px" width="11" height="11.5" viewBox="0 0 11 11.5"><rect x="0.65" y="0.65" width="9.7" height="10.2" fill="#fff" stroke="#3c3c3c" stroke-width="1.25"/><path d="M2.1 6.1 L4.4 8.5 L9.1 3.4" fill="none" stroke="#4e4e4e" stroke-width="1.25"/></svg>
<div class="a" style="left:23px;top:284.01px;width:801px;height:16.667px;background:#e0e0e0;border-top:1px solid #cbcbcb"></div>
<div class="t r" style="right:1010.7px;top:286.21px;height:16px;line-height:16px;color:#1a1a1a"><span style="transform:scaleX(0.95);transform-origin:100% 0">1</span></div>
<div class="t" style="left:59px;top:286.21px;height:16px;line-height:16px;color:#1a1a1a"><span style="transform:scaleX(0.88);transform-origin:0 0">CAIXA</span></div>
<div class="t" style="left:174px;top:286.21px;height:16px;line-height:16px;color:#1a1a1a"><span style="transform:scaleX(0.96);transform-origin:0 0">15/01/2020</span></div>
<div class="t" style="left:246px;top:286.21px;height:16px;line-height:16px;color:#1a1a1a"><span style="transform:scaleX(0.88);transform-origin:0 0">STM</span></div>
<div class="t r" style="right:752.7px;top:286.21px;height:16px;line-height:16px;color:#1a1a1a"><span style="transform:scaleX(0.95);transform-origin:100% 0">53095</span></div>
<div class="t" style="left:317px;top:286.21px;height:16px;line-height:16px;color:#1a1a1a"><span style="transform:scaleX(0.88);transform-origin:0 0">FORNECEDOR 3</span></div>
<div class="t r" style="right:551.7px;top:286.21px;height:16px;line-height:16px;color:#1a1a1a"><span style="transform:scaleX(0.95);transform-origin:100% 0">121220191</span></div>
<div class="t" style="left:518px;top:286.21px;height:16px;line-height:16px;color:#1a1a1a"><span style="transform:scaleX(0.95);transform-origin:0 0">04</span></div>
<div class="t r" style="right:491.70000000000005px;top:286.21px;height:16px;line-height:16px;color:#1a1a1a"><span style="transform:scaleX(0.95);transform-origin:100% 0">0</span></div>
<div class="t r" style="right:439.70000000000005px;top:286.21px;height:16px;line-height:16px;color:#1a1a1a"><span style="transform:scaleX(0.95);transform-origin:100% 0">722,50</span></div>
<div class="t r" style="right:370.70000000000005px;top:286.21px;height:16px;line-height:16px;color:#1a1a1a"><span style="transform:scaleX(0.95);transform-origin:100% 0">722,50</span></div>
<div class="t r" style="right:310.70000000000005px;top:286.21px;height:16px;line-height:16px;color:#1a1a1a"><span style="transform:scaleX(0.95);transform-origin:100% 0">0,00</span></div>
<div class="t r" style="right:243.70000000000005px;top:286.21px;height:16px;line-height:16px;color:#1a1a1a"><span style="transform:scaleX(0.95);transform-origin:100% 0">0,00</span></div>
<div class="a" style="left:0;top:300.68px;width:23px;height:16.667px;background:linear-gradient(90deg,#fcfcfc,#eeeeee);border-top:1.3px solid #959595"></div>
<svg class="a" style="left:5px;top:304.28px" width="11" height="11.5" viewBox="0 0 11 11.5"><rect x="0.65" y="0.65" width="9.7" height="10.2" fill="#fff" stroke="#3c3c3c" stroke-width="1.25"/><path d="M2.1 6.1 L4.4 8.5 L9.1 3.4" fill="none" stroke="#4e4e4e" stroke-width="1.25"/></svg>
<div class="a" style="left:23px;top:300.68px;width:801px;height:16.667px;background:#e0e0bc;border-top:1px solid #cbcbcb"></div>
<div class="t r" style="right:1010.7px;top:302.88px;height:16px;line-height:16px;color:#1a1a1a"><span style="transform:scaleX(0.95);transform-origin:100% 0">1</span></div>
<div class="t" style="left:59px;top:302.88px;height:16px;line-height:16px;color:#1a1a1a"><span style="transform:scaleX(0.88);transform-origin:0 0">CAIXA</span></div>
<div class="t" style="left:174px;top:302.88px;height:16px;line-height:16px;color:#1a1a1a"><span style="transform:scaleX(0.96);transform-origin:0 0">15/01/2020</span></div>
<div class="t" style="left:246px;top:302.88px;height:16px;line-height:16px;color:#1a1a1a"><span style="transform:scaleX(0.88);transform-origin:0 0">STM</span></div>
<div class="t r" style="right:752.7px;top:302.88px;height:16px;line-height:16px;color:#1a1a1a"><span style="transform:scaleX(0.95);transform-origin:100% 0">53095</span></div>
<div class="t" style="left:317px;top:302.88px;height:16px;line-height:16px;color:#1a1a1a"><span style="transform:scaleX(0.88);transform-origin:0 0">FORNECEDOR 3</span></div>
<div class="t r" style="right:551.7px;top:302.88px;height:16px;line-height:16px;color:#1a1a1a"><span style="transform:scaleX(0.95);transform-origin:100% 0">201220191</span></div>
<div class="t" style="left:518px;top:302.88px;height:16px;line-height:16px;color:#1a1a1a"><span style="transform:scaleX(0.95);transform-origin:0 0">10</span></div>
<div class="t r" style="right:491.70000000000005px;top:302.88px;height:16px;line-height:16px;color:#1a1a1a"><span style="transform:scaleX(0.95);transform-origin:100% 0">0</span></div>
<div class="t r" style="right:439.70000000000005px;top:302.88px;height:16px;line-height:16px;color:#1a1a1a"><span style="transform:scaleX(0.95);transform-origin:100% 0">513,10</span></div>
<div class="t r" style="right:370.70000000000005px;top:302.88px;height:16px;line-height:16px;color:#1a1a1a"><span style="transform:scaleX(0.95);transform-origin:100% 0">513,10</span></div>
<div class="t r" style="right:310.70000000000005px;top:302.88px;height:16px;line-height:16px;color:#1a1a1a"><span style="transform:scaleX(0.95);transform-origin:100% 0">0,00</span></div>
<div class="t r" style="right:243.70000000000005px;top:302.88px;height:16px;line-height:16px;color:#1a1a1a"><span style="transform:scaleX(0.95);transform-origin:100% 0">0,00</span></div>
<div class="a" style="left:0;top:317.34px;width:23px;height:16.667px;background:linear-gradient(90deg,#fcfcfc,#eeeeee);border-top:1.3px solid #959595"></div>
<svg class="a" style="left:5px;top:320.94px" width="11" height="11.5" viewBox="0 0 11 11.5"><rect x="0.65" y="0.65" width="9.7" height="10.2" fill="#fff" stroke="#3c3c3c" stroke-width="1.25"/><path d="M2.1 6.1 L4.4 8.5 L9.1 3.4" fill="none" stroke="#4e4e4e" stroke-width="1.25"/></svg>
<div class="a" style="left:23px;top:317.34px;width:801px;height:16.667px;background:#e0e0e0;border-top:1px solid #cbcbcb"></div>
<div class="t r" style="right:1010.7px;top:319.54px;height:16px;line-height:16px;color:#1a1a1a"><span style="transform:scaleX(0.95);transform-origin:100% 0">1</span></div>
<div class="t" style="left:59px;top:319.54px;height:16px;line-height:16px;color:#1a1a1a"><span style="transform:scaleX(0.88);transform-origin:0 0">CAIXA</span></div>
<div class="t" style="left:174px;top:319.54px;height:16px;line-height:16px;color:#1a1a1a"><span style="transform:scaleX(0.96);transform-origin:0 0">21/01/2020</span></div>
<div class="t" style="left:246px;top:319.54px;height:16px;line-height:16px;color:#1a1a1a"><span style="transform:scaleX(0.88);transform-origin:0 0">STM</span></div>
<div class="t r" style="right:752.7px;top:319.54px;height:16px;line-height:16px;color:#1a1a1a"><span style="transform:scaleX(0.95);transform-origin:100% 0">52716</span></div>
<div class="t" style="left:317px;top:319.54px;height:16px;line-height:16px;color:#1a1a1a"><span style="transform:scaleX(0.88);transform-origin:0 0">FORNECEDOR 2</span></div>
<div class="t r" style="right:551.7px;top:319.54px;height:16px;line-height:16px;color:#1a1a1a"><span style="transform:scaleX(0.95);transform-origin:100% 0">17012020</span></div>
<div class="t" style="left:518px;top:319.54px;height:16px;line-height:16px;color:#1a1a1a"><span style="transform:scaleX(0.95);transform-origin:0 0">26</span></div>
<div class="t r" style="right:491.70000000000005px;top:319.54px;height:16px;line-height:16px;color:#1a1a1a"><span style="transform:scaleX(0.95);transform-origin:100% 0">0</span></div>
<div class="t r" style="right:439.70000000000005px;top:319.54px;height:16px;line-height:16px;color:#1a1a1a"><span style="transform:scaleX(0.95);transform-origin:100% 0">1.220,90</span></div>
<div class="t r" style="right:370.70000000000005px;top:319.54px;height:16px;line-height:16px;color:#1a1a1a"><span style="transform:scaleX(0.95);transform-origin:100% 0">1.220,90</span></div>
<div class="t r" style="right:310.70000000000005px;top:319.54px;height:16px;line-height:16px;color:#1a1a1a"><span style="transform:scaleX(0.95);transform-origin:100% 0">0,00</span></div>
<div class="t r" style="right:243.70000000000005px;top:319.54px;height:16px;line-height:16px;color:#1a1a1a"><span style="transform:scaleX(0.95);transform-origin:100% 0">0,00</span></div>
<div class="a" style="left:0;top:334.01px;width:23px;height:16.667px;background:linear-gradient(90deg,#fcfcfc,#eeeeee);border-top:1.3px solid #959595"></div>
<svg class="a" style="left:5px;top:337.61px" width="11" height="11.5" viewBox="0 0 11 11.5"><rect x="0.65" y="0.65" width="9.7" height="10.2" fill="#fff" stroke="#3c3c3c" stroke-width="1.25"/><path d="M2.1 6.1 L4.4 8.5 L9.1 3.4" fill="none" stroke="#4e4e4e" stroke-width="1.25"/></svg>
<div class="a" style="left:23px;top:334.01px;width:801px;height:16.667px;background:#e0e0bc;border-top:1px solid #cbcbcb"></div>
<div class="t r" style="right:1010.7px;top:336.21px;height:16px;line-height:16px;color:#1a1a1a"><span style="transform:scaleX(0.95);transform-origin:100% 0">1</span></div>
<div class="t" style="left:59px;top:336.21px;height:16px;line-height:16px;color:#1a1a1a"><span style="transform:scaleX(0.88);transform-origin:0 0">CAIXA</span></div>
<div class="t" style="left:174px;top:336.21px;height:16px;line-height:16px;color:#1a1a1a"><span style="transform:scaleX(0.96);transform-origin:0 0">21/01/2020</span></div>
<div class="t" style="left:246px;top:336.21px;height:16px;line-height:16px;color:#1a1a1a"><span style="transform:scaleX(0.88);transform-origin:0 0">STM</span></div>
<div class="t r" style="right:752.7px;top:336.21px;height:16px;line-height:16px;color:#1a1a1a"><span style="transform:scaleX(0.95);transform-origin:100% 0">52716</span></div>
<div class="t" style="left:317px;top:336.21px;height:16px;line-height:16px;color:#1a1a1a"><span style="transform:scaleX(0.88);transform-origin:0 0">FORNECEDOR 2</span></div>
<div class="t r" style="right:551.7px;top:336.21px;height:16px;line-height:16px;color:#1a1a1a"><span style="transform:scaleX(0.95);transform-origin:100% 0">30120200</span></div>
<div class="t" style="left:518px;top:336.21px;height:16px;line-height:16px;color:#1a1a1a"><span style="transform:scaleX(0.95);transform-origin:0 0">27</span></div>
<div class="t r" style="right:491.70000000000005px;top:336.21px;height:16px;line-height:16px;color:#1a1a1a"><span style="transform:scaleX(0.95);transform-origin:100% 0">0</span></div>
<div class="t r" style="right:439.70000000000005px;top:336.21px;height:16px;line-height:16px;color:#1a1a1a"><span style="transform:scaleX(0.95);transform-origin:100% 0">1.220,40</span></div>
<div class="t r" style="right:370.70000000000005px;top:336.21px;height:16px;line-height:16px;color:#1a1a1a"><span style="transform:scaleX(0.95);transform-origin:100% 0">1.220,40</span></div>
<div class="t r" style="right:310.70000000000005px;top:336.21px;height:16px;line-height:16px;color:#1a1a1a"><span style="transform:scaleX(0.95);transform-origin:100% 0">0,00</span></div>
<div class="t r" style="right:243.70000000000005px;top:336.21px;height:16px;line-height:16px;color:#1a1a1a"><span style="transform:scaleX(0.95);transform-origin:100% 0">0,00</span></div>
<div class="a" style="left:0;top:350.68px;width:23px;height:16.667px;background:linear-gradient(90deg,#fcfcfc,#eeeeee);border-top:1.3px solid #959595"></div>
<svg class="a" style="left:5px;top:354.28px" width="11" height="11.5" viewBox="0 0 11 11.5"><rect x="0.65" y="0.65" width="9.7" height="10.2" fill="#fff" stroke="#3c3c3c" stroke-width="1.25"/><path d="M2.1 6.1 L4.4 8.5 L9.1 3.4" fill="none" stroke="#4e4e4e" stroke-width="1.25"/></svg>
<div class="a" style="left:23px;top:350.68px;width:801px;height:16.667px;background:#e0e0e0;border-top:1px solid #cbcbcb"></div>
<div class="t r" style="right:1010.7px;top:352.88px;height:16px;line-height:16px;color:#1a1a1a"><span style="transform:scaleX(0.95);transform-origin:100% 0">1</span></div>
<div class="t" style="left:59px;top:352.88px;height:16px;line-height:16px;color:#1a1a1a"><span style="transform:scaleX(0.88);transform-origin:0 0">CAIXA</span></div>
<div class="t" style="left:174px;top:352.88px;height:16px;line-height:16px;color:#1a1a1a"><span style="transform:scaleX(0.96);transform-origin:0 0">21/01/2020</span></div>
<div class="t" style="left:246px;top:352.88px;height:16px;line-height:16px;color:#1a1a1a"><span style="transform:scaleX(0.88);transform-origin:0 0">STM</span></div>
<div class="t r" style="right:752.7px;top:352.88px;height:16px;line-height:16px;color:#1a1a1a"><span style="transform:scaleX(0.95);transform-origin:100% 0">53095</span></div>
<div class="t" style="left:317px;top:352.88px;height:16px;line-height:16px;color:#1a1a1a"><span style="transform:scaleX(0.88);transform-origin:0 0">FORNECEDOR 3</span></div>
<div class="t r" style="right:551.7px;top:352.88px;height:16px;line-height:16px;color:#1a1a1a"><span style="transform:scaleX(0.95);transform-origin:100% 0">9012020</span></div>
<div class="t" style="left:518px;top:352.88px;height:16px;line-height:16px;color:#1a1a1a"><span style="transform:scaleX(0.95);transform-origin:0 0">01</span></div>
<div class="t r" style="right:491.70000000000005px;top:352.88px;height:16px;line-height:16px;color:#1a1a1a"><span style="transform:scaleX(0.95);transform-origin:100% 0">0</span></div>
<div class="t r" style="right:439.70000000000005px;top:352.88px;height:16px;line-height:16px;color:#1a1a1a"><span style="transform:scaleX(0.95);transform-origin:100% 0">1.346,10</span></div>
<div class="t r" style="right:370.70000000000005px;top:352.88px;height:16px;line-height:16px;color:#1a1a1a"><span style="transform:scaleX(0.95);transform-origin:100% 0">1.346,10</span></div>
<div class="t r" style="right:310.70000000000005px;top:352.88px;height:16px;line-height:16px;color:#1a1a1a"><span style="transform:scaleX(0.95);transform-origin:100% 0">0,00</span></div>
<div class="t r" style="right:243.70000000000005px;top:352.88px;height:16px;line-height:16px;color:#1a1a1a"><span style="transform:scaleX(0.95);transform-origin:100% 0">0,00</span></div>
<div class="a" style="left:0;top:367.34px;width:23px;height:16.667px;background:linear-gradient(90deg,#fcfcfc,#eeeeee);border-top:1.3px solid #959595"></div>
<svg class="a" style="left:5px;top:370.94px" width="11" height="11.5" viewBox="0 0 11 11.5"><rect x="0.65" y="0.65" width="9.7" height="10.2" fill="#fff" stroke="#3c3c3c" stroke-width="1.25"/><path d="M2.1 6.1 L4.4 8.5 L9.1 3.4" fill="none" stroke="#4e4e4e" stroke-width="1.25"/></svg>
<div class="a" style="left:23px;top:367.34px;width:801px;height:16.667px;background:#e0e0bc;border-top:1px solid #cbcbcb"></div>
<div class="t r" style="right:1010.7px;top:369.54px;height:16px;line-height:16px;color:#1a1a1a"><span style="transform:scaleX(0.95);transform-origin:100% 0">1</span></div>
<div class="t" style="left:59px;top:369.54px;height:16px;line-height:16px;color:#1a1a1a"><span style="transform:scaleX(0.88);transform-origin:0 0">CAIXA</span></div>
<div class="t" style="left:174px;top:369.54px;height:16px;line-height:16px;color:#1a1a1a"><span style="transform:scaleX(0.96);transform-origin:0 0">21/01/2020</span></div>
<div class="t" style="left:246px;top:369.54px;height:16px;line-height:16px;color:#1a1a1a"><span style="transform:scaleX(0.88);transform-origin:0 0">STM</span></div>
<div class="t r" style="right:752.7px;top:369.54px;height:16px;line-height:16px;color:#1a1a1a"><span style="transform:scaleX(0.95);transform-origin:100% 0">53095</span></div>
<div class="t" style="left:317px;top:369.54px;height:16px;line-height:16px;color:#1a1a1a"><span style="transform:scaleX(0.88);transform-origin:0 0">FORNECEDOR 3</span></div>
<div class="t r" style="right:551.7px;top:369.54px;height:16px;line-height:16px;color:#1a1a1a"><span style="transform:scaleX(0.95);transform-origin:100% 0">17012020</span></div>
<div class="t" style="left:518px;top:369.54px;height:16px;line-height:16px;color:#1a1a1a"><span style="transform:scaleX(0.95);transform-origin:0 0">02</span></div>
<div class="t r" style="right:491.70000000000005px;top:369.54px;height:16px;line-height:16px;color:#1a1a1a"><span style="transform:scaleX(0.95);transform-origin:100% 0">0</span></div>
<div class="t r" style="right:439.70000000000005px;top:369.54px;height:16px;line-height:16px;color:#1a1a1a"><span style="transform:scaleX(0.95);transform-origin:100% 0">501,70</span></div>
<div class="t r" style="right:370.70000000000005px;top:369.54px;height:16px;line-height:16px;color:#1a1a1a"><span style="transform:scaleX(0.95);transform-origin:100% 0">501,70</span></div>
<div class="t r" style="right:310.70000000000005px;top:369.54px;height:16px;line-height:16px;color:#1a1a1a"><span style="transform:scaleX(0.95);transform-origin:100% 0">0,00</span></div>
<div class="t r" style="right:243.70000000000005px;top:369.54px;height:16px;line-height:16px;color:#1a1a1a"><span style="transform:scaleX(0.95);transform-origin:100% 0">0,00</span></div>
<div class="a" style="left:0;top:384.01px;width:23px;height:16.667px;background:linear-gradient(90deg,#fcfcfc,#eeeeee);border-top:1.3px solid #959595"></div>
<svg class="a" style="left:5px;top:387.61px" width="11" height="11.5" viewBox="0 0 11 11.5"><rect x="0.65" y="0.65" width="9.7" height="10.2" fill="#fff" stroke="#3c3c3c" stroke-width="1.25"/><path d="M2.1 6.1 L4.4 8.5 L9.1 3.4" fill="none" stroke="#4e4e4e" stroke-width="1.25"/></svg>
<div class="a" style="left:23px;top:384.01px;width:801px;height:16.667px;background:#e0e0e0;border-top:1px solid #cbcbcb"></div>
<div class="t r" style="right:1010.7px;top:386.21px;height:16px;line-height:16px;color:#1a1a1a"><span style="transform:scaleX(0.95);transform-origin:100% 0">46</span></div>
<div class="t" style="left:59px;top:386.21px;height:16px;line-height:16px;color:#1a1a1a"><span style="transform:scaleX(0.88);transform-origin:0 0">BANCO DO BRASIL</span></div>
<div class="t" style="left:174px;top:386.21px;height:16px;line-height:16px;color:#1a1a1a"><span style="transform:scaleX(0.96);transform-origin:0 0">28/01/2020</span></div>
<div class="t" style="left:246px;top:386.21px;height:16px;line-height:16px;color:#1a1a1a"><span style="transform:scaleX(0.88);transform-origin:0 0">STM</span></div>
<div class="t r" style="right:752.7px;top:386.21px;height:16px;line-height:16px;color:#1a1a1a"><span style="transform:scaleX(0.95);transform-origin:100% 0">4200</span></div>
<div class="t" style="left:317px;top:386.21px;height:16px;line-height:16px;color:#1a1a1a"><span style="transform:scaleX(0.88);transform-origin:0 0">CLIENTE 4</span></div>
<div class="t r" style="right:551.7px;top:386.21px;height:16px;line-height:16px;color:#1a1a1a"><span style="transform:scaleX(0.95);transform-origin:100% 0">264874</span></div>
<div class="t" style="left:518px;top:386.21px;height:16px;line-height:16px;color:#1a1a1a"><span style="transform:scaleX(0.95);transform-origin:0 0">07</span></div>
<div class="t r" style="right:491.70000000000005px;top:386.21px;height:16px;line-height:16px;color:#1a1a1a"><span style="transform:scaleX(0.95);transform-origin:100% 0">0</span></div>
<div class="t r" style="right:439.70000000000005px;top:386.21px;height:16px;line-height:16px;color:#1a1a1a"><span style="transform:scaleX(0.95);transform-origin:100% 0">0,00</span></div>
<div class="t r" style="right:370.70000000000005px;top:386.21px;height:16px;line-height:16px;color:#1a1a1a"><span style="transform:scaleX(0.95);transform-origin:100% 0">0,00</span></div>
<div class="t r" style="right:310.70000000000005px;top:386.21px;height:16px;line-height:16px;color:#1a1a1a"><span style="transform:scaleX(0.95);transform-origin:100% 0">2.520,00</span></div>
<div class="t r" style="right:243.70000000000005px;top:386.21px;height:16px;line-height:16px;color:#1a1a1a"><span style="transform:scaleX(0.95);transform-origin:100% 0">2.520,00</span></div>
<div class="a" style="left:0;top:400.68px;width:23px;height:16.667px;background:linear-gradient(90deg,#fcfcfc,#eeeeee);border-top:1.3px solid #959595"></div>
<svg class="a" style="left:5px;top:404.28px" width="11" height="11.5" viewBox="0 0 11 11.5"><rect x="0.65" y="0.65" width="9.7" height="10.2" fill="#fff" stroke="#3c3c3c" stroke-width="1.25"/><path d="M2.1 6.1 L4.4 8.5 L9.1 3.4" fill="none" stroke="#4e4e4e" stroke-width="1.25"/></svg>
<div class="a" style="left:23px;top:400.68px;width:801px;height:16.667px;background:#e0e0bc;border-top:1px solid #cbcbcb"></div>
<div class="t r" style="right:1010.7px;top:402.88px;height:16px;line-height:16px;color:#1a1a1a"><span style="transform:scaleX(0.95);transform-origin:100% 0">46</span></div>
<div class="t" style="left:59px;top:402.88px;height:16px;line-height:16px;color:#1a1a1a"><span style="transform:scaleX(0.88);transform-origin:0 0">BANCO DO BRASIL</span></div>
<div class="t" style="left:174px;top:402.88px;height:16px;line-height:16px;color:#1a1a1a"><span style="transform:scaleX(0.96);transform-origin:0 0">28/01/2020</span></div>
<div class="t" style="left:246px;top:402.88px;height:16px;line-height:16px;color:#1a1a1a"><span style="transform:scaleX(0.88);transform-origin:0 0">STM</span></div>
<div class="t r" style="right:752.7px;top:402.88px;height:16px;line-height:16px;color:#1a1a1a"><span style="transform:scaleX(0.95);transform-origin:100% 0">4200</span></div>
<div class="t" style="left:317px;top:402.88px;height:16px;line-height:16px;color:#1a1a1a"><span style="transform:scaleX(0.88);transform-origin:0 0">CLIENTE 4</span></div>
<div class="t r" style="right:551.7px;top:402.88px;height:16px;line-height:16px;color:#1a1a1a"><span style="transform:scaleX(0.95);transform-origin:100% 0">264879</span></div>
<div class="t" style="left:518px;top:402.88px;height:16px;line-height:16px;color:#1a1a1a"><span style="transform:scaleX(0.95);transform-origin:0 0">08</span></div>
<div class="t r" style="right:491.70000000000005px;top:402.88px;height:16px;line-height:16px;color:#1a1a1a"><span style="transform:scaleX(0.95);transform-origin:100% 0">0</span></div>
<div class="t r" style="right:439.70000000000005px;top:402.88px;height:16px;line-height:16px;color:#1a1a1a"><span style="transform:scaleX(0.95);transform-origin:100% 0">0,00</span></div>
<div class="t r" style="right:370.70000000000005px;top:402.88px;height:16px;line-height:16px;color:#1a1a1a"><span style="transform:scaleX(0.95);transform-origin:100% 0">0,00</span></div>
<div class="t r" style="right:310.70000000000005px;top:402.88px;height:16px;line-height:16px;color:#1a1a1a"><span style="transform:scaleX(0.95);transform-origin:100% 0">2.520,00</span></div>
<div class="t r" style="right:243.70000000000005px;top:402.88px;height:16px;line-height:16px;color:#1a1a1a"><span style="transform:scaleX(0.95);transform-origin:100% 0">2.520,00</span></div>
<div class="a" style="left:0;top:417.35px;width:23px;height:16.667px;background:linear-gradient(90deg,#fcfcfc,#eeeeee);border-top:1.3px solid #959595"></div>
<svg class="a" style="left:5px;top:420.95px" width="11" height="11.5" viewBox="0 0 11 11.5"><rect x="0.65" y="0.65" width="9.7" height="10.2" fill="#fff" stroke="#3c3c3c" stroke-width="1.25"/><path d="M2.1 6.1 L4.4 8.5 L9.1 3.4" fill="none" stroke="#4e4e4e" stroke-width="1.25"/></svg>
<div class="a" style="left:23px;top:417.35px;width:801px;height:16.667px;background:#e0e0e0;border-top:1px solid #cbcbcb"></div>
<div class="t r" style="right:1010.7px;top:419.55px;height:16px;line-height:16px;color:#1a1a1a"><span style="transform:scaleX(0.95);transform-origin:100% 0">46</span></div>
<div class="t" style="left:59px;top:419.55px;height:16px;line-height:16px;color:#1a1a1a"><span style="transform:scaleX(0.88);transform-origin:0 0">BANCO DO BRASIL</span></div>
<div class="t" style="left:174px;top:419.55px;height:16px;line-height:16px;color:#1a1a1a"><span style="transform:scaleX(0.96);transform-origin:0 0">04/02/2020</span></div>
<div class="t" style="left:246px;top:419.55px;height:16px;line-height:16px;color:#1a1a1a"><span style="transform:scaleX(0.88);transform-origin:0 0">STM</span></div>
<div class="t r" style="right:752.7px;top:419.55px;height:16px;line-height:16px;color:#1a1a1a"><span style="transform:scaleX(0.95);transform-origin:100% 0">4200</span></div>
<div class="t" style="left:317px;top:419.55px;height:16px;line-height:16px;color:#1a1a1a"><span style="transform:scaleX(0.88);transform-origin:0 0">CLIENTE 4</span></div>
<div class="t r" style="right:551.7px;top:419.55px;height:16px;line-height:16px;color:#1a1a1a"><span style="transform:scaleX(0.95);transform-origin:100% 0">264888</span></div>
<div class="t" style="left:518px;top:419.55px;height:16px;line-height:16px;color:#1a1a1a"><span style="transform:scaleX(0.95);transform-origin:0 0">13</span></div>
<div class="t r" style="right:491.70000000000005px;top:419.55px;height:16px;line-height:16px;color:#1a1a1a"><span style="transform:scaleX(0.95);transform-origin:100% 0">0</span></div>
<div class="t r" style="right:439.70000000000005px;top:419.55px;height:16px;line-height:16px;color:#1a1a1a"><span style="transform:scaleX(0.95);transform-origin:100% 0">0,00</span></div>
<div class="t r" style="right:370.70000000000005px;top:419.55px;height:16px;line-height:16px;color:#1a1a1a"><span style="transform:scaleX(0.95);transform-origin:100% 0">0,00</span></div>
<div class="t r" style="right:310.70000000000005px;top:419.55px;height:16px;line-height:16px;color:#1a1a1a"><span style="transform:scaleX(0.95);transform-origin:100% 0">2.520,00</span></div>
<div class="t r" style="right:243.70000000000005px;top:419.55px;height:16px;line-height:16px;color:#1a1a1a"><span style="transform:scaleX(0.95);transform-origin:100% 0">2.520,00</span></div>
<div class="a" style="left:0;top:434.01px;width:23px;height:16.667px;background:linear-gradient(90deg,#fcfcfc,#eeeeee);border-top:1.3px solid #959595"></div>
<svg class="a" style="left:5px;top:437.61px" width="11" height="11.5" viewBox="0 0 11 11.5"><rect x="0.65" y="0.65" width="9.7" height="10.2" fill="#fff" stroke="#3c3c3c" stroke-width="1.25"/><path d="M2.1 6.1 L4.4 8.5 L9.1 3.4" fill="none" stroke="#4e4e4e" stroke-width="1.25"/></svg>
<div class="a" style="left:23px;top:434.01px;width:801px;height:16.667px;background:#e0e0bc;border-top:1px solid #cbcbcb"></div>
<div class="t r" style="right:1010.7px;top:436.21px;height:16px;line-height:16px;color:#1a1a1a"><span style="transform:scaleX(0.95);transform-origin:100% 0">46</span></div>
<div class="t" style="left:59px;top:436.21px;height:16px;line-height:16px;color:#1a1a1a"><span style="transform:scaleX(0.88);transform-origin:0 0">BANCO DO BRASIL</span></div>
<div class="t" style="left:174px;top:436.21px;height:16px;line-height:16px;color:#1a1a1a"><span style="transform:scaleX(0.96);transform-origin:0 0">07/02/2020</span></div>
<div class="t" style="left:246px;top:436.21px;height:16px;line-height:16px;color:#1a1a1a"><span style="transform:scaleX(0.88);transform-origin:0 0">STM</span></div>
<div class="t r" style="right:752.7px;top:436.21px;height:16px;line-height:16px;color:#1a1a1a"><span style="transform:scaleX(0.95);transform-origin:100% 0">4489</span></div>
<div class="t" style="left:317px;top:436.21px;height:16px;line-height:16px;color:#1a1a1a"><span style="transform:scaleX(0.88);transform-origin:0 0">CLIENTE 2</span></div>
<div class="t r" style="right:551.7px;top:436.21px;height:16px;line-height:16px;color:#1a1a1a"><span style="transform:scaleX(0.95);transform-origin:100% 0">264877</span></div>
<div class="t" style="left:518px;top:436.21px;height:16px;line-height:16px;color:#1a1a1a"><span style="transform:scaleX(0.95);transform-origin:0 0">15</span></div>
<div class="t r" style="right:491.70000000000005px;top:436.21px;height:16px;line-height:16px;color:#1a1a1a"><span style="transform:scaleX(0.95);transform-origin:100% 0">0</span></div>
<div class="t r" style="right:439.70000000000005px;top:436.21px;height:16px;line-height:16px;color:#1a1a1a"><span style="transform:scaleX(0.95);transform-origin:100% 0">0,00</span></div>
<div class="t r" style="right:370.70000000000005px;top:436.21px;height:16px;line-height:16px;color:#1a1a1a"><span style="transform:scaleX(0.95);transform-origin:100% 0">0,00</span></div>
<div class="t r" style="right:310.70000000000005px;top:436.21px;height:16px;line-height:16px;color:#1a1a1a"><span style="transform:scaleX(0.95);transform-origin:100% 0">1.008,00</span></div>
<div class="t r" style="right:243.70000000000005px;top:436.21px;height:16px;line-height:16px;color:#1a1a1a"><span style="transform:scaleX(0.95);transform-origin:100% 0">1.008,00</span></div>
<div class="a" style="left:0;top:450.68px;width:23px;height:16.667px;background:linear-gradient(90deg,#fcfcfc,#eeeeee);border-top:1.3px solid #959595"></div>
<svg class="a" style="left:5px;top:454.28px" width="11" height="11.5" viewBox="0 0 11 11.5"><rect x="0.65" y="0.65" width="9.7" height="10.2" fill="#fff" stroke="#3c3c3c" stroke-width="1.25"/><path d="M2.1 6.1 L4.4 8.5 L9.1 3.4" fill="none" stroke="#4e4e4e" stroke-width="1.25"/></svg>
<div class="a" style="left:23px;top:450.68px;width:801px;height:16.667px;background:#e0e0e0;border-top:1px solid #cbcbcb"></div>
<div class="t r" style="right:1010.7px;top:452.88px;height:16px;line-height:16px;color:#1a1a1a"><span style="transform:scaleX(0.95);transform-origin:100% 0">46</span></div>
<div class="t" style="left:59px;top:452.88px;height:16px;line-height:16px;color:#1a1a1a"><span style="transform:scaleX(0.88);transform-origin:0 0">BANCO DO BRASIL</span></div>
<div class="t" style="left:174px;top:452.88px;height:16px;line-height:16px;color:#1a1a1a"><span style="transform:scaleX(0.96);transform-origin:0 0">11/02/2020</span></div>
<div class="t" style="left:246px;top:452.88px;height:16px;line-height:16px;color:#1a1a1a"><span style="transform:scaleX(0.88);transform-origin:0 0">STM</span></div>
<div class="t r" style="right:752.7px;top:452.88px;height:16px;line-height:16px;color:#1a1a1a"><span style="transform:scaleX(0.95);transform-origin:100% 0">562</span></div>
<div class="t" style="left:317px;top:452.88px;height:16px;line-height:16px;color:#1a1a1a"><span style="transform:scaleX(0.88);transform-origin:0 0">RECH INFORMATICA LTDA</span></div>
<div class="t r" style="right:551.7px;top:452.88px;height:16px;line-height:16px;color:#1a1a1a"><span style="transform:scaleX(0.95);transform-origin:100% 0">264870</span></div>
<div class="t" style="left:518px;top:452.88px;height:16px;line-height:16px;color:#1a1a1a"><span style="transform:scaleX(0.95);transform-origin:0 0">17</span></div>
<div class="t r" style="right:491.70000000000005px;top:452.88px;height:16px;line-height:16px;color:#1a1a1a"><span style="transform:scaleX(0.95);transform-origin:100% 0">0</span></div>
<div class="t r" style="right:439.70000000000005px;top:452.88px;height:16px;line-height:16px;color:#1a1a1a"><span style="transform:scaleX(0.95);transform-origin:100% 0">0,00</span></div>
<div class="t r" style="right:370.70000000000005px;top:452.88px;height:16px;line-height:16px;color:#1a1a1a"><span style="transform:scaleX(0.95);transform-origin:100% 0">0,00</span></div>
<div class="t r" style="right:310.70000000000005px;top:452.88px;height:16px;line-height:16px;color:#1a1a1a"><span style="transform:scaleX(0.95);transform-origin:100% 0">386,04</span></div>
<div class="t r" style="right:243.70000000000005px;top:452.88px;height:16px;line-height:16px;color:#1a1a1a"><span style="transform:scaleX(0.95);transform-origin:100% 0">386,04</span></div>
<div class="a" style="left:0;top:467.35px;width:23px;height:16.667px;background:linear-gradient(90deg,#fcfcfc,#eeeeee);border-top:1.3px solid #959595"></div>
<svg class="a" style="left:5px;top:470.95px" width="11" height="11.5" viewBox="0 0 11 11.5"><rect x="0.65" y="0.65" width="9.7" height="10.2" fill="#fff" stroke="#3c3c3c" stroke-width="1.25"/><path d="M2.1 6.1 L4.4 8.5 L9.1 3.4" fill="none" stroke="#4e4e4e" stroke-width="1.25"/></svg>
<div class="a" style="left:23px;top:467.35px;width:801px;height:16.667px;background:#e0e0bc;border-top:1px solid #cbcbcb"></div>
<div class="t r" style="right:1010.7px;top:469.55px;height:16px;line-height:16px;color:#1a1a1a"><span style="transform:scaleX(0.95);transform-origin:100% 0">46</span></div>
<div class="t" style="left:59px;top:469.55px;height:16px;line-height:16px;color:#1a1a1a"><span style="transform:scaleX(0.88);transform-origin:0 0">BANCO DO BRASIL</span></div>
<div class="t" style="left:174px;top:469.55px;height:16px;line-height:16px;color:#1a1a1a"><span style="transform:scaleX(0.96);transform-origin:0 0">11/02/2020</span></div>
<div class="t" style="left:246px;top:469.55px;height:16px;line-height:16px;color:#1a1a1a"><span style="transform:scaleX(0.88);transform-origin:0 0">STM</span></div>
<div class="t r" style="right:752.7px;top:469.55px;height:16px;line-height:16px;color:#1a1a1a"><span style="transform:scaleX(0.95);transform-origin:100% 0">562</span></div>
<div class="t" style="left:317px;top:469.55px;height:16px;line-height:16px;color:#1a1a1a"><span style="transform:scaleX(0.88);transform-origin:0 0">RECH INFORMATICA LTDA</span></div>
<div class="t r" style="right:551.7px;top:469.55px;height:16px;line-height:16px;color:#1a1a1a"><span style="transform:scaleX(0.95);transform-origin:100% 0">264880</span></div>
<div class="t" style="left:518px;top:469.55px;height:16px;line-height:16px;color:#1a1a1a"><span style="transform:scaleX(0.95);transform-origin:0 0">18</span></div>
<div class="t r" style="right:491.70000000000005px;top:469.55px;height:16px;line-height:16px;color:#1a1a1a"><span style="transform:scaleX(0.95);transform-origin:100% 0">0</span></div>
<div class="t r" style="right:439.70000000000005px;top:469.55px;height:16px;line-height:16px;color:#1a1a1a"><span style="transform:scaleX(0.95);transform-origin:100% 0">0,00</span></div>
<div class="t r" style="right:370.70000000000005px;top:469.55px;height:16px;line-height:16px;color:#1a1a1a"><span style="transform:scaleX(0.95);transform-origin:100% 0">0,00</span></div>
<div class="t r" style="right:310.70000000000005px;top:469.55px;height:16px;line-height:16px;color:#1a1a1a"><span style="transform:scaleX(0.95);transform-origin:100% 0">772,12</span></div>
<div class="t r" style="right:243.70000000000005px;top:469.55px;height:16px;line-height:16px;color:#1a1a1a"><span style="transform:scaleX(0.95);transform-origin:100% 0">772,12</span></div>
<div class="a" style="left:0;top:484.01px;width:23px;height:16.667px;background:linear-gradient(90deg,#fcfcfc,#eeeeee);border-top:1.3px solid #959595"></div>
<svg class="a" style="left:5px;top:487.61px" width="11" height="11.5" viewBox="0 0 11 11.5"><rect x="0.65" y="0.65" width="9.7" height="10.2" fill="#fff" stroke="#3c3c3c" stroke-width="1.25"/><path d="M2.1 6.1 L4.4 8.5 L9.1 3.4" fill="none" stroke="#4e4e4e" stroke-width="1.25"/></svg>
<div class="a" style="left:23px;top:484.01px;width:801px;height:16.667px;background:#e0e0e0;border-top:1px solid #cbcbcb"></div>
<div class="t r" style="right:1010.7px;top:486.21px;height:16px;line-height:16px;color:#1a1a1a"><span style="transform:scaleX(0.95);transform-origin:100% 0">1</span></div>
<div class="t" style="left:59px;top:486.21px;height:16px;line-height:16px;color:#1a1a1a"><span style="transform:scaleX(0.88);transform-origin:0 0">CAIXA</span></div>
<div class="t" style="left:174px;top:486.21px;height:16px;line-height:16px;color:#1a1a1a"><span style="transform:scaleX(0.96);transform-origin:0 0">20/02/2020</span></div>
<div class="t" style="left:246px;top:486.21px;height:16px;line-height:16px;color:#1a1a1a"><span style="transform:scaleX(0.88);transform-origin:0 0">STM</span></div>
<div class="t r" style="right:752.7px;top:486.21px;height:16px;line-height:16px;color:#1a1a1a"><span style="transform:scaleX(0.95);transform-origin:100% 0">52716</span></div>
<div class="t" style="left:317px;top:486.21px;height:16px;line-height:16px;color:#1a1a1a"><span style="transform:scaleX(0.88);transform-origin:0 0">FORNECEDOR 2</span></div>
<div class="t r" style="right:551.7px;top:486.21px;height:16px;line-height:16px;color:#1a1a1a"><span style="transform:scaleX(0.95);transform-origin:100% 0">240120</span></div>
<div class="t" style="left:518px;top:486.21px;height:16px;line-height:16px;color:#1a1a1a"><span style="transform:scaleX(0.95);transform-origin:0 0">30</span></div>
<div class="t r" style="right:491.70000000000005px;top:486.21px;height:16px;line-height:16px;color:#1a1a1a"><span style="transform:scaleX(0.95);transform-origin:100% 0">0</span></div>
<div class="t r" style="right:439.70000000000005px;top:486.21px;height:16px;line-height:16px;color:#1a1a1a"><span style="transform:scaleX(0.95);transform-origin:100% 0">1.040,60</span></div>
<div class="t r" style="right:370.70000000000005px;top:486.21px;height:16px;line-height:16px;color:#1a1a1a"><span style="transform:scaleX(0.95);transform-origin:100% 0">1.040,60</span></div>
<div class="t r" style="right:310.70000000000005px;top:486.21px;height:16px;line-height:16px;color:#1a1a1a"><span style="transform:scaleX(0.95);transform-origin:100% 0">0,00</span></div>
<div class="t r" style="right:243.70000000000005px;top:486.21px;height:16px;line-height:16px;color:#1a1a1a"><span style="transform:scaleX(0.95);transform-origin:100% 0">0,00</span></div>
<div class="a" style="left:0;top:500.68px;width:23px;height:16.667px;background:linear-gradient(90deg,#fcfcfc,#eeeeee);border-top:1.3px solid #959595"></div>
<svg class="a" style="left:5px;top:504.28px" width="11" height="11.5" viewBox="0 0 11 11.5"><rect x="0.65" y="0.65" width="9.7" height="10.2" fill="#fff" stroke="#3c3c3c" stroke-width="1.25"/><path d="M2.1 6.1 L4.4 8.5 L9.1 3.4" fill="none" stroke="#4e4e4e" stroke-width="1.25"/></svg>
<div class="a" style="left:23px;top:500.68px;width:801px;height:16.667px;background:#e0e0bc;border-top:1px solid #cbcbcb"></div>
<div class="t r" style="right:1010.7px;top:502.88px;height:16px;line-height:16px;color:#1a1a1a"><span style="transform:scaleX(0.95);transform-origin:100% 0">1</span></div>
<div class="t" style="left:59px;top:502.88px;height:16px;line-height:16px;color:#1a1a1a"><span style="transform:scaleX(0.88);transform-origin:0 0">CAIXA</span></div>
<div class="t" style="left:174px;top:502.88px;height:16px;line-height:16px;color:#1a1a1a"><span style="transform:scaleX(0.96);transform-origin:0 0">20/02/2020</span></div>
<div class="t" style="left:246px;top:502.88px;height:16px;line-height:16px;color:#1a1a1a"><span style="transform:scaleX(0.88);transform-origin:0 0">STM</span></div>
<div class="t r" style="right:752.7px;top:502.88px;height:16px;line-height:16px;color:#1a1a1a"><span style="transform:scaleX(0.95);transform-origin:100% 0">53095</span></div>
<div class="t" style="left:317px;top:502.88px;height:16px;line-height:16px;color:#1a1a1a"><span style="transform:scaleX(0.88);transform-origin:0 0">FORNECEDOR 3</span></div>
<div class="t r" style="right:551.7px;top:502.88px;height:16px;line-height:16px;color:#1a1a1a"><span style="transform:scaleX(0.95);transform-origin:100% 0">2401209</span></div>
<div class="t" style="left:518px;top:502.88px;height:16px;line-height:16px;color:#1a1a1a"><span style="transform:scaleX(0.95);transform-origin:0 0">02</span></div>
<div class="t r" style="right:491.70000000000005px;top:502.88px;height:16px;line-height:16px;color:#1a1a1a"><span style="transform:scaleX(0.95);transform-origin:100% 0">0</span></div>
<div class="t r" style="right:439.70000000000005px;top:502.88px;height:16px;line-height:16px;color:#1a1a1a"><span style="transform:scaleX(0.95);transform-origin:100% 0">466,00</span></div>
<div class="t r" style="right:370.70000000000005px;top:502.88px;height:16px;line-height:16px;color:#1a1a1a"><span style="transform:scaleX(0.95);transform-origin:100% 0">466,00</span></div>
<div class="t r" style="right:310.70000000000005px;top:502.88px;height:16px;line-height:16px;color:#1a1a1a"><span style="transform:scaleX(0.95);transform-origin:100% 0">0,00</span></div>
<div class="t r" style="right:243.70000000000005px;top:502.88px;height:16px;line-height:16px;color:#1a1a1a"><span style="transform:scaleX(0.95);transform-origin:100% 0">0,00</span></div>
<div class="a" style="left:0;top:517.35px;width:23px;height:16.667px;background:linear-gradient(90deg,#fcfcfc,#eeeeee);border-top:1.3px solid #959595"></div>
<svg class="a" style="left:5px;top:520.95px" width="11" height="11.5" viewBox="0 0 11 11.5"><rect x="0.65" y="0.65" width="9.7" height="10.2" fill="#fff" stroke="#3c3c3c" stroke-width="1.25"/><path d="M2.1 6.1 L4.4 8.5 L9.1 3.4" fill="none" stroke="#4e4e4e" stroke-width="1.25"/></svg>
<div class="a" style="left:23px;top:517.35px;width:801px;height:16.667px;background:#e0e0e0;border-top:1px solid #cbcbcb"></div>
<div class="t r" style="right:1010.7px;top:519.55px;height:16px;line-height:16px;color:#1a1a1a"><span style="transform:scaleX(0.95);transform-origin:100% 0">1</span></div>
<div class="t" style="left:59px;top:519.55px;height:16px;line-height:16px;color:#1a1a1a"><span style="transform:scaleX(0.88);transform-origin:0 0">CAIXA</span></div>
<div class="t" style="left:174px;top:519.55px;height:16px;line-height:16px;color:#1a1a1a"><span style="transform:scaleX(0.96);transform-origin:0 0">20/02/2020</span></div>
<div class="t" style="left:246px;top:519.55px;height:16px;line-height:16px;color:#1a1a1a"><span style="transform:scaleX(0.88);transform-origin:0 0">STM</span></div>
<div class="t r" style="right:752.7px;top:519.55px;height:16px;line-height:16px;color:#1a1a1a"><span style="transform:scaleX(0.95);transform-origin:100% 0">53095</span></div>
<div class="t" style="left:317px;top:519.55px;height:16px;line-height:16px;color:#1a1a1a"><span style="transform:scaleX(0.88);transform-origin:0 0">FORNECEDOR 3</span></div>
<div class="t r" style="right:551.7px;top:519.55px;height:16px;line-height:16px;color:#1a1a1a"><span style="transform:scaleX(0.95);transform-origin:100% 0">31012037</span></div>
<div class="t" style="left:518px;top:519.55px;height:16px;line-height:16px;color:#1a1a1a"><span style="transform:scaleX(0.95);transform-origin:0 0">03</span></div>
<div class="t r" style="right:491.70000000000005px;top:519.55px;height:16px;line-height:16px;color:#1a1a1a"><span style="transform:scaleX(0.95);transform-origin:100% 0">0</span></div>
<div class="t r" style="right:439.70000000000005px;top:519.55px;height:16px;line-height:16px;color:#1a1a1a"><span style="transform:scaleX(0.95);transform-origin:100% 0">608,10</span></div>
<div class="t r" style="right:370.70000000000005px;top:519.55px;height:16px;line-height:16px;color:#1a1a1a"><span style="transform:scaleX(0.95);transform-origin:100% 0">608,10</span></div>
<div class="t r" style="right:310.70000000000005px;top:519.55px;height:16px;line-height:16px;color:#1a1a1a"><span style="transform:scaleX(0.95);transform-origin:100% 0">0,00</span></div>
<div class="t r" style="right:243.70000000000005px;top:519.55px;height:16px;line-height:16px;color:#1a1a1a"><span style="transform:scaleX(0.95);transform-origin:100% 0">0,00</span></div>
<div class="a" style="left:0;top:534.01px;width:23px;height:16.667px;background:linear-gradient(90deg,#fcfcfc,#eeeeee);border-top:1.3px solid #959595"></div>
<svg class="a" style="left:5px;top:537.61px" width="11" height="11.5" viewBox="0 0 11 11.5"><rect x="0.65" y="0.65" width="9.7" height="10.2" fill="#fff" stroke="#3c3c3c" stroke-width="1.25"/><path d="M2.1 6.1 L4.4 8.5 L9.1 3.4" fill="none" stroke="#4e4e4e" stroke-width="1.25"/></svg>
<div class="a" style="left:23px;top:534.01px;width:801px;height:16.667px;background:#e0e0bc;border-top:1px solid #cbcbcb"></div>
<div class="t r" style="right:1010.7px;top:536.21px;height:16px;line-height:16px;color:#1a1a1a"><span style="transform:scaleX(0.95);transform-origin:100% 0">46</span></div>
<div class="t" style="left:59px;top:536.21px;height:16px;line-height:16px;color:#1a1a1a"><span style="transform:scaleX(0.88);transform-origin:0 0">BANCO DO BRASIL</span></div>
<div class="t" style="left:174px;top:536.21px;height:16px;line-height:16px;color:#1a1a1a"><span style="transform:scaleX(0.96);transform-origin:0 0">26/02/2020</span></div>
<div class="t" style="left:246px;top:536.21px;height:16px;line-height:16px;color:#1a1a1a"><span style="transform:scaleX(0.88);transform-origin:0 0">STM</span></div>
<div class="t r" style="right:752.7px;top:536.21px;height:16px;line-height:16px;color:#1a1a1a"><span style="transform:scaleX(0.95);transform-origin:100% 0">4489</span></div>
<div class="t" style="left:317px;top:536.21px;height:16px;line-height:16px;color:#1a1a1a"><span style="transform:scaleX(0.88);transform-origin:0 0">CLIENTE 2</span></div>
<div class="t r" style="right:551.7px;top:536.21px;height:16px;line-height:16px;color:#1a1a1a"><span style="transform:scaleX(0.95);transform-origin:100% 0">699300</span></div>
<div class="t" style="left:518px;top:536.21px;height:16px;line-height:16px;color:#1a1a1a"><span style="transform:scaleX(0.95);transform-origin:0 0">05</span></div>
<div class="t r" style="right:491.70000000000005px;top:536.21px;height:16px;line-height:16px;color:#1a1a1a"><span style="transform:scaleX(0.95);transform-origin:100% 0">0</span></div>
<div class="t r" style="right:439.70000000000005px;top:536.21px;height:16px;line-height:16px;color:#1a1a1a"><span style="transform:scaleX(0.95);transform-origin:100% 0">0,00</span></div>
<div class="t r" style="right:370.70000000000005px;top:536.21px;height:16px;line-height:16px;color:#1a1a1a"><span style="transform:scaleX(0.95);transform-origin:100% 0">0,00</span></div>
<div class="t r" style="right:310.70000000000005px;top:536.21px;height:16px;line-height:16px;color:#1a1a1a"><span style="transform:scaleX(0.95);transform-origin:100% 0">150,00</span></div>
<div class="t r" style="right:243.70000000000005px;top:536.21px;height:16px;line-height:16px;color:#1a1a1a"><span style="transform:scaleX(0.95);transform-origin:100% 0">150,00</span></div>
<div class="a" style="left:0;top:550.68px;width:23px;height:16.667px;background:linear-gradient(90deg,#fcfcfc,#eeeeee);border-top:1.3px solid #959595"></div>
<svg class="a" style="left:5px;top:554.28px" width="11" height="11.5" viewBox="0 0 11 11.5"><rect x="0.65" y="0.65" width="9.7" height="10.2" fill="#fff" stroke="#3c3c3c" stroke-width="1.25"/><path d="M2.1 6.1 L4.4 8.5 L9.1 3.4" fill="none" stroke="#4e4e4e" stroke-width="1.25"/></svg>
<div class="a" style="left:23px;top:550.68px;width:801px;height:16.667px;background:#e0e0e0;border-top:1px solid #cbcbcb"></div>
<div class="t r" style="right:1010.7px;top:552.88px;height:16px;line-height:16px;color:#1a1a1a"><span style="transform:scaleX(0.95);transform-origin:100% 0">46</span></div>
<div class="t" style="left:59px;top:552.88px;height:16px;line-height:16px;color:#1a1a1a"><span style="transform:scaleX(0.88);transform-origin:0 0">BANCO DO BRASIL</span></div>
<div class="t" style="left:174px;top:552.88px;height:16px;line-height:16px;color:#1a1a1a"><span style="transform:scaleX(0.96);transform-origin:0 0">27/02/2020</span></div>
<div class="t" style="left:246px;top:552.88px;height:16px;line-height:16px;color:#1a1a1a"><span style="transform:scaleX(0.88);transform-origin:0 0">STM</span></div>
<div class="t r" style="right:752.7px;top:552.88px;height:16px;line-height:16px;color:#1a1a1a"><span style="transform:scaleX(0.95);transform-origin:100% 0">4200</span></div>
<div class="t" style="left:317px;top:552.88px;height:16px;line-height:16px;color:#1a1a1a"><span style="transform:scaleX(0.88);transform-origin:0 0">CLIENTE 4</span></div>
<div class="t r" style="right:551.7px;top:552.88px;height:16px;line-height:16px;color:#1a1a1a"><span style="transform:scaleX(0.95);transform-origin:100% 0">699294</span></div>
<div class="t" style="left:518px;top:552.88px;height:16px;line-height:16px;color:#1a1a1a"><span style="transform:scaleX(0.95);transform-origin:0 0">07</span></div>
<div class="t r" style="right:491.70000000000005px;top:552.88px;height:16px;line-height:16px;color:#1a1a1a"><span style="transform:scaleX(0.95);transform-origin:100% 0">0</span></div>
<div class="t r" style="right:439.70000000000005px;top:552.88px;height:16px;line-height:16px;color:#1a1a1a"><span style="transform:scaleX(0.95);transform-origin:100% 0">0,00</span></div>
<div class="t r" style="right:370.70000000000005px;top:552.88px;height:16px;line-height:16px;color:#1a1a1a"><span style="transform:scaleX(0.95);transform-origin:100% 0">0,00</span></div>
<div class="t r" style="right:310.70000000000005px;top:552.88px;height:16px;line-height:16px;color:#1a1a1a"><span style="transform:scaleX(0.95);transform-origin:100% 0">3.102,00</span></div>
<div class="t r" style="right:243.70000000000005px;top:552.88px;height:16px;line-height:16px;color:#1a1a1a"><span style="transform:scaleX(0.95);transform-origin:100% 0">3.102,00</span></div>
<div class="a" style="left:0;top:567.35px;width:23px;height:16.667px;background:linear-gradient(90deg,#fcfcfc,#eeeeee);border-top:1.3px solid #959595"></div>
<svg class="a" style="left:5px;top:570.95px" width="11" height="11.5" viewBox="0 0 11 11.5"><rect x="0.65" y="0.65" width="9.7" height="10.2" fill="#fff" stroke="#3c3c3c" stroke-width="1.25"/><path d="M2.1 6.1 L4.4 8.5 L9.1 3.4" fill="none" stroke="#4e4e4e" stroke-width="1.25"/></svg>
<div class="a" style="left:23px;top:567.35px;width:801px;height:16.667px;background:#e0e0bc;border-top:1px solid #cbcbcb"></div>
<div class="t r" style="right:1010.7px;top:569.55px;height:16px;line-height:16px;color:#1a1a1a"><span style="transform:scaleX(0.95);transform-origin:100% 0">46</span></div>
<div class="t" style="left:59px;top:569.55px;height:16px;line-height:16px;color:#1a1a1a"><span style="transform:scaleX(0.88);transform-origin:0 0">BANCO DO BRASIL</span></div>
<div class="t" style="left:174px;top:569.55px;height:16px;line-height:16px;color:#1a1a1a"><span style="transform:scaleX(0.96);transform-origin:0 0">02/03/2020</span></div>
<div class="t" style="left:246px;top:569.55px;height:16px;line-height:16px;color:#1a1a1a"><span style="transform:scaleX(0.88);transform-origin:0 0">STM</span></div>
<div class="t r" style="right:752.7px;top:569.55px;height:16px;line-height:16px;color:#1a1a1a"><span style="transform:scaleX(0.95);transform-origin:100% 0">4489</span></div>
<div class="t" style="left:317px;top:569.55px;height:16px;line-height:16px;color:#1a1a1a"><span style="transform:scaleX(0.88);transform-origin:0 0">CLIENTE 2</span></div>
<div class="t r" style="right:551.7px;top:569.55px;height:16px;line-height:16px;color:#1a1a1a"><span style="transform:scaleX(0.95);transform-origin:100% 0">699283</span></div>
<div class="t" style="left:518px;top:569.55px;height:16px;line-height:16px;color:#1a1a1a"><span style="transform:scaleX(0.95);transform-origin:0 0">17</span></div>
<div class="t r" style="right:491.70000000000005px;top:569.55px;height:16px;line-height:16px;color:#1a1a1a"><span style="transform:scaleX(0.95);transform-origin:100% 0">0</span></div>
<div class="t r" style="right:439.70000000000005px;top:569.55px;height:16px;line-height:16px;color:#1a1a1a"><span style="transform:scaleX(0.95);transform-origin:100% 0">0,00</span></div>
<div class="t r" style="right:370.70000000000005px;top:569.55px;height:16px;line-height:16px;color:#1a1a1a"><span style="transform:scaleX(0.95);transform-origin:100% 0">0,00</span></div>
<div class="t r" style="right:310.70000000000005px;top:569.55px;height:16px;line-height:16px;color:#1a1a1a"><span style="transform:scaleX(0.95);transform-origin:100% 0">470,00</span></div>
<div class="t r" style="right:243.70000000000005px;top:569.55px;height:16px;line-height:16px;color:#1a1a1a"><span style="transform:scaleX(0.95);transform-origin:100% 0">470,00</span></div>
<div class="a" style="left:0;top:584.01px;width:23px;height:16.667px;background:linear-gradient(90deg,#fcfcfc,#eeeeee);border-top:1.3px solid #959595"></div>
<svg class="a" style="left:5px;top:587.62px" width="11" height="11.5" viewBox="0 0 11 11.5"><rect x="0.65" y="0.65" width="9.7" height="10.2" fill="#fff" stroke="#3c3c3c" stroke-width="1.25"/><path d="M2.1 6.1 L4.4 8.5 L9.1 3.4" fill="none" stroke="#4e4e4e" stroke-width="1.25"/></svg>
<div class="a" style="left:23px;top:584.01px;width:801px;height:16.667px;background:#e0e0e0;border-top:1px solid #cbcbcb"></div>
<div class="t r" style="right:1010.7px;top:586.22px;height:16px;line-height:16px;color:#1a1a1a"><span style="transform:scaleX(0.95);transform-origin:100% 0">46</span></div>
<div class="t" style="left:59px;top:586.22px;height:16px;line-height:16px;color:#1a1a1a"><span style="transform:scaleX(0.88);transform-origin:0 0">BANCO DO BRASIL</span></div>
<div class="t" style="left:174px;top:586.22px;height:16px;line-height:16px;color:#1a1a1a"><span style="transform:scaleX(0.96);transform-origin:0 0">02/03/2020</span></div>
<div class="t" style="left:246px;top:586.22px;height:16px;line-height:16px;color:#1a1a1a"><span style="transform:scaleX(0.88);transform-origin:0 0">STM</span></div>
<div class="t r" style="right:752.7px;top:586.22px;height:16px;line-height:16px;color:#1a1a1a"><span style="transform:scaleX(0.95);transform-origin:100% 0">4489</span></div>
<div class="t" style="left:317px;top:586.22px;height:16px;line-height:16px;color:#1a1a1a"><span style="transform:scaleX(0.88);transform-origin:0 0">CLIENTE 2</span></div>
<div class="t r" style="right:551.7px;top:586.22px;height:16px;line-height:16px;color:#1a1a1a"><span style="transform:scaleX(0.95);transform-origin:100% 0">699300</span></div>
<div class="t" style="left:518px;top:586.22px;height:16px;line-height:16px;color:#1a1a1a"><span style="transform:scaleX(0.95);transform-origin:0 0">18</span></div>
<div class="t r" style="right:491.70000000000005px;top:586.22px;height:16px;line-height:16px;color:#1a1a1a"><span style="transform:scaleX(0.95);transform-origin:100% 0">0</span></div>
<div class="t r" style="right:439.70000000000005px;top:586.22px;height:16px;line-height:16px;color:#1a1a1a"><span style="transform:scaleX(0.95);transform-origin:100% 0">0,00</span></div>
<div class="t r" style="right:370.70000000000005px;top:586.22px;height:16px;line-height:16px;color:#1a1a1a"><span style="transform:scaleX(0.95);transform-origin:100% 0">0,00</span></div>
<div class="t r" style="right:310.70000000000005px;top:586.22px;height:16px;line-height:16px;color:#1a1a1a"><span style="transform:scaleX(0.95);transform-origin:100% 0">1.128,00</span></div>
<div class="t r" style="right:243.70000000000005px;top:586.22px;height:16px;line-height:16px;color:#1a1a1a"><span style="transform:scaleX(0.95);transform-origin:100% 0">1.128,00</span></div>
<div class="a" style="left:0;top:600.68px;width:23px;height:16.667px;background:linear-gradient(90deg,#fcfcfc,#eeeeee);border-top:1.3px solid #959595"></div>
<svg class="a" style="left:5px;top:604.28px" width="11" height="11.5" viewBox="0 0 11 11.5"><rect x="0.65" y="0.65" width="9.7" height="10.2" fill="#fff" stroke="#3c3c3c" stroke-width="1.25"/><path d="M2.1 6.1 L4.4 8.5 L9.1 3.4" fill="none" stroke="#4e4e4e" stroke-width="1.25"/></svg>
<div class="a" style="left:23px;top:600.68px;width:801px;height:16.667px;background:#e0e0bc;border-top:1px solid #cbcbcb"></div>
<div class="t r" style="right:1010.7px;top:602.88px;height:16px;line-height:16px;color:#1a1a1a"><span style="transform:scaleX(0.95);transform-origin:100% 0">46</span></div>
<div class="t" style="left:59px;top:602.88px;height:16px;line-height:16px;color:#1a1a1a"><span style="transform:scaleX(0.88);transform-origin:0 0">BANCO DO BRASIL</span></div>
<div class="t" style="left:174px;top:602.88px;height:16px;line-height:16px;color:#1a1a1a"><span style="transform:scaleX(0.96);transform-origin:0 0">04/03/2020</span></div>
<div class="t" style="left:246px;top:602.88px;height:16px;line-height:16px;color:#1a1a1a"><span style="transform:scaleX(0.88);transform-origin:0 0">STM</span></div>
<div class="t r" style="right:752.7px;top:602.88px;height:16px;line-height:16px;color:#1a1a1a"><span style="transform:scaleX(0.95);transform-origin:100% 0">562</span></div>
<div class="t" style="left:317px;top:602.88px;height:16px;line-height:16px;color:#1a1a1a"><span style="transform:scaleX(0.88);transform-origin:0 0">RECH INFORMATICA LTDA</span></div>
<div class="t r" style="right:551.7px;top:602.88px;height:16px;line-height:16px;color:#1a1a1a"><span style="transform:scaleX(0.95);transform-origin:100% 0">699276</span></div>
<div class="t" style="left:518px;top:602.88px;height:16px;line-height:16px;color:#1a1a1a"><span style="transform:scaleX(0.95);transform-origin:0 0">26</span></div>
<div class="t r" style="right:491.70000000000005px;top:602.88px;height:16px;line-height:16px;color:#1a1a1a"><span style="transform:scaleX(0.95);transform-origin:100% 0">0</span></div>
<div class="t r" style="right:439.70000000000005px;top:602.88px;height:16px;line-height:16px;color:#1a1a1a"><span style="transform:scaleX(0.95);transform-origin:100% 0">0,00</span></div>
<div class="t r" style="right:370.70000000000005px;top:602.88px;height:16px;line-height:16px;color:#1a1a1a"><span style="transform:scaleX(0.95);transform-origin:100% 0">0,00</span></div>
<div class="t r" style="right:310.70000000000005px;top:602.88px;height:16px;line-height:16px;color:#1a1a1a"><span style="transform:scaleX(0.95);transform-origin:100% 0">386,04</span></div>
<div class="t r" style="right:243.70000000000005px;top:602.88px;height:16px;line-height:16px;color:#1a1a1a"><span style="transform:scaleX(0.95);transform-origin:100% 0">386,04</span></div>
<div class="a" style="left:0;top:617.35px;width:23px;height:16.667px;background:linear-gradient(90deg,#fcfcfc,#eeeeee);border-top:1.3px solid #959595"></div>
<svg class="a" style="left:5px;top:620.95px" width="11" height="11.5" viewBox="0 0 11 11.5"><rect x="0.65" y="0.65" width="9.7" height="10.2" fill="#fff" stroke="#3c3c3c" stroke-width="1.25"/><path d="M2.1 6.1 L4.4 8.5 L9.1 3.4" fill="none" stroke="#4e4e4e" stroke-width="1.25"/></svg>
<div class="a" style="left:23px;top:617.35px;width:801px;height:16.667px;background:#e0e0e0;border-top:1px solid #cbcbcb"></div>
<div class="t r" style="right:1010.7px;top:619.55px;height:16px;line-height:16px;color:#1a1a1a"><span style="transform:scaleX(0.95);transform-origin:100% 0">46</span></div>
<div class="t" style="left:59px;top:619.55px;height:16px;line-height:16px;color:#1a1a1a"><span style="transform:scaleX(0.88);transform-origin:0 0">BANCO DO BRASIL</span></div>
<div class="t" style="left:174px;top:619.55px;height:16px;line-height:16px;color:#1a1a1a"><span style="transform:scaleX(0.96);transform-origin:0 0">04/03/2020</span></div>
<div class="t" style="left:246px;top:619.55px;height:16px;line-height:16px;color:#1a1a1a"><span style="transform:scaleX(0.88);transform-origin:0 0">STM</span></div>
<div class="t r" style="right:752.7px;top:619.55px;height:16px;line-height:16px;color:#1a1a1a"><span style="transform:scaleX(0.95);transform-origin:100% 0">562</span></div>
<div class="t" style="left:317px;top:619.55px;height:16px;line-height:16px;color:#1a1a1a"><span style="transform:scaleX(0.88);transform-origin:0 0">RECH INFORMATICA LTDA</span></div>
<div class="t r" style="right:551.7px;top:619.55px;height:16px;line-height:16px;color:#1a1a1a"><span style="transform:scaleX(0.95);transform-origin:100% 0">699279</span></div>
<div class="t" style="left:518px;top:619.55px;height:16px;line-height:16px;color:#1a1a1a"><span style="transform:scaleX(0.95);transform-origin:0 0">27</span></div>
<div class="t r" style="right:491.70000000000005px;top:619.55px;height:16px;line-height:16px;color:#1a1a1a"><span style="transform:scaleX(0.95);transform-origin:100% 0">0</span></div>
<div class="t r" style="right:439.70000000000005px;top:619.55px;height:16px;line-height:16px;color:#1a1a1a"><span style="transform:scaleX(0.95);transform-origin:100% 0">0,00</span></div>
<div class="t r" style="right:370.70000000000005px;top:619.55px;height:16px;line-height:16px;color:#1a1a1a"><span style="transform:scaleX(0.95);transform-origin:100% 0">0,00</span></div>
<div class="t r" style="right:310.70000000000005px;top:619.55px;height:16px;line-height:16px;color:#1a1a1a"><span style="transform:scaleX(0.95);transform-origin:100% 0">386,04</span></div>
<div class="t r" style="right:243.70000000000005px;top:619.55px;height:16px;line-height:16px;color:#1a1a1a"><span style="transform:scaleX(0.95);transform-origin:100% 0">386,04</span></div>
<div class="a" style="left:0;top:634.02px;width:23px;height:16.667px;background:linear-gradient(90deg,#fcfcfc,#eeeeee);border-top:1.3px solid #959595"></div>
<svg class="a" style="left:5px;top:637.62px" width="11" height="11.5" viewBox="0 0 11 11.5"><rect x="0.65" y="0.65" width="9.7" height="10.2" fill="#fff" stroke="#3c3c3c" stroke-width="1.25"/><path d="M2.1 6.1 L4.4 8.5 L9.1 3.4" fill="none" stroke="#4e4e4e" stroke-width="1.25"/></svg>
<div class="a" style="left:23px;top:634.02px;width:801px;height:16.667px;background:#e0e0bc;border-top:1px solid #cbcbcb"></div>
<div class="t r" style="right:1010.7px;top:636.22px;height:16px;line-height:16px;color:#1a1a1a"><span style="transform:scaleX(0.95);transform-origin:100% 0">46</span></div>
<div class="t" style="left:59px;top:636.22px;height:16px;line-height:16px;color:#1a1a1a"><span style="transform:scaleX(0.88);transform-origin:0 0">BANCO DO BRASIL</span></div>
<div class="t" style="left:174px;top:636.22px;height:16px;line-height:16px;color:#1a1a1a"><span style="transform:scaleX(0.96);transform-origin:0 0">04/03/2020</span></div>
<div class="t" style="left:246px;top:636.22px;height:16px;line-height:16px;color:#1a1a1a"><span style="transform:scaleX(0.88);transform-origin:0 0">STM</span></div>
<div class="t r" style="right:752.7px;top:636.22px;height:16px;line-height:16px;color:#1a1a1a"><span style="transform:scaleX(0.95);transform-origin:100% 0">562</span></div>
<div class="t" style="left:317px;top:636.22px;height:16px;line-height:16px;color:#1a1a1a"><span style="transform:scaleX(0.88);transform-origin:0 0">RECH INFORMATICA LTDA</span></div>
<div class="t r" style="right:551.7px;top:636.22px;height:16px;line-height:16px;color:#1a1a1a"><span style="transform:scaleX(0.95);transform-origin:100% 0">699285</span></div>
<div class="t" style="left:518px;top:636.22px;height:16px;line-height:16px;color:#1a1a1a"><span style="transform:scaleX(0.95);transform-origin:0 0">28</span></div>
<div class="t r" style="right:491.70000000000005px;top:636.22px;height:16px;line-height:16px;color:#1a1a1a"><span style="transform:scaleX(0.95);transform-origin:100% 0">0</span></div>
<div class="t r" style="right:439.70000000000005px;top:636.22px;height:16px;line-height:16px;color:#1a1a1a"><span style="transform:scaleX(0.95);transform-origin:100% 0">0,00</span></div>
<div class="t r" style="right:370.70000000000005px;top:636.22px;height:16px;line-height:16px;color:#1a1a1a"><span style="transform:scaleX(0.95);transform-origin:100% 0">0,00</span></div>
<div class="t r" style="right:310.70000000000005px;top:636.22px;height:16px;line-height:16px;color:#1a1a1a"><span style="transform:scaleX(0.95);transform-origin:100% 0">386,04</span></div>
<div class="t r" style="right:243.70000000000005px;top:636.22px;height:16px;line-height:16px;color:#1a1a1a"><span style="transform:scaleX(0.95);transform-origin:100% 0">386,04</span></div>
<div class="a" style="left:0;top:650.68px;width:23px;height:16.667px;background:linear-gradient(90deg,#fcfcfc,#eeeeee);border-top:1.3px solid #959595"></div>
<svg class="a" style="left:5px;top:654.28px" width="11" height="11.5" viewBox="0 0 11 11.5"><rect x="0.65" y="0.65" width="9.7" height="10.2" fill="#fff" stroke="#3c3c3c" stroke-width="1.25"/><path d="M2.1 6.1 L4.4 8.5 L9.1 3.4" fill="none" stroke="#4e4e4e" stroke-width="1.25"/></svg>
<div class="a" style="left:23px;top:650.68px;width:801px;height:16.667px;background:#e0e0e0;border-top:1px solid #cbcbcb"></div>
<div class="t r" style="right:1010.7px;top:652.88px;height:16px;line-height:16px;color:#1a1a1a"><span style="transform:scaleX(0.95);transform-origin:100% 0">46</span></div>
<div class="t" style="left:59px;top:652.88px;height:16px;line-height:16px;color:#1a1a1a"><span style="transform:scaleX(0.88);transform-origin:0 0">BANCO DO BRASIL</span></div>
<div class="t" style="left:174px;top:652.88px;height:16px;line-height:16px;color:#1a1a1a"><span style="transform:scaleX(0.96);transform-origin:0 0">04/03/2020</span></div>
<div class="t" style="left:246px;top:652.88px;height:16px;line-height:16px;color:#1a1a1a"><span style="transform:scaleX(0.88);transform-origin:0 0">STM</span></div>
<div class="t r" style="right:752.7px;top:652.88px;height:16px;line-height:16px;color:#1a1a1a"><span style="transform:scaleX(0.95);transform-origin:100% 0">562</span></div>
<div class="t" style="left:317px;top:652.88px;height:16px;line-height:16px;color:#1a1a1a"><span style="transform:scaleX(0.88);transform-origin:0 0">RECH INFORMATICA LTDA</span></div>
<div class="t r" style="right:551.7px;top:652.88px;height:16px;line-height:16px;color:#1a1a1a"><span style="transform:scaleX(0.95);transform-origin:100% 0">699286</span></div>
<div class="t" style="left:518px;top:652.88px;height:16px;line-height:16px;color:#1a1a1a"><span style="transform:scaleX(0.95);transform-origin:0 0">29</span></div>
<div class="t r" style="right:491.70000000000005px;top:652.88px;height:16px;line-height:16px;color:#1a1a1a"><span style="transform:scaleX(0.95);transform-origin:100% 0">0</span></div>
<div class="t r" style="right:439.70000000000005px;top:652.88px;height:16px;line-height:16px;color:#1a1a1a"><span style="transform:scaleX(0.95);transform-origin:100% 0">0,00</span></div>
<div class="t r" style="right:370.70000000000005px;top:652.88px;height:16px;line-height:16px;color:#1a1a1a"><span style="transform:scaleX(0.95);transform-origin:100% 0">0,00</span></div>
<div class="t r" style="right:310.70000000000005px;top:652.88px;height:16px;line-height:16px;color:#1a1a1a"><span style="transform:scaleX(0.95);transform-origin:100% 0">386,04</span></div>
<div class="t r" style="right:243.70000000000005px;top:652.88px;height:16px;line-height:16px;color:#1a1a1a"><span style="transform:scaleX(0.95);transform-origin:100% 0">386,04</span></div>
<div class="a" style="left:23px;top:0;width:1px;height:664px;background:#cbcbcb"></div>
<div class="a" style="left:24px;top:0;width:1px;height:664px;background:#d9d9d9;opacity:.5"></div>
<div class="a" style="left:23px;top:1px;width:2px;height:16px;background:#a2a2a2"></div>
<div class="a" style="left:57px;top:0;width:1px;height:664px;background:#cbcbcb"></div>
<div class="a" style="left:58px;top:0;width:1px;height:664px;background:#d9d9d9;opacity:.5"></div>
<div class="a" style="left:57px;top:1px;width:2px;height:16px;background:#a2a2a2"></div>
<div class="a" style="left:172px;top:0;width:1px;height:664px;background:#cbcbcb"></div>
<div class="a" style="left:173px;top:0;width:1px;height:664px;background:#d9d9d9;opacity:.5"></div>
<div class="a" style="left:172px;top:1px;width:2px;height:16px;background:#a2a2a2"></div>
<div class="a" style="left:244px;top:0;width:1px;height:664px;background:#cbcbcb"></div>
<div class="a" style="left:245px;top:0;width:1px;height:664px;background:#d9d9d9;opacity:.5"></div>
<div class="a" style="left:244px;top:1px;width:2px;height:16px;background:#a2a2a2"></div>
<div class="a" style="left:276px;top:0;width:1px;height:664px;background:#cbcbcb"></div>
<div class="a" style="left:277px;top:0;width:1px;height:664px;background:#d9d9d9;opacity:.5"></div>
<div class="a" style="left:276px;top:1px;width:2px;height:16px;background:#a2a2a2"></div>
<div class="a" style="left:315px;top:0;width:1px;height:664px;background:#cbcbcb"></div>
<div class="a" style="left:316px;top:0;width:1px;height:664px;background:#d9d9d9;opacity:.5"></div>
<div class="a" style="left:315px;top:1px;width:2px;height:16px;background:#a2a2a2"></div>
<div class="a" style="left:442px;top:0;width:1px;height:664px;background:#cbcbcb"></div>
<div class="a" style="left:443px;top:0;width:1px;height:664px;background:#d9d9d9;opacity:.5"></div>
<div class="a" style="left:442px;top:1px;width:2px;height:16px;background:#a2a2a2"></div>
<div class="a" style="left:516px;top:0;width:1px;height:664px;background:#cbcbcb"></div>
<div class="a" style="left:517px;top:0;width:1px;height:664px;background:#d9d9d9;opacity:.5"></div>
<div class="a" style="left:516px;top:1px;width:2px;height:16px;background:#a2a2a2"></div>
<div class="a" style="left:545px;top:0;width:1px;height:664px;background:#cbcbcb"></div>
<div class="a" style="left:546px;top:0;width:1px;height:664px;background:#d9d9d9;opacity:.5"></div>
<div class="a" style="left:545px;top:1px;width:2px;height:16px;background:#a2a2a2"></div>
<div class="a" style="left:576px;top:0;width:1px;height:664px;background:#cbcbcb"></div>
<div class="a" style="left:577px;top:0;width:1px;height:664px;background:#d9d9d9;opacity:.5"></div>
<div class="a" style="left:576px;top:1px;width:2px;height:16px;background:#a2a2a2"></div>
<div class="a" style="left:628px;top:0;width:1px;height:664px;background:#cbcbcb"></div>
<div class="a" style="left:629px;top:0;width:1px;height:664px;background:#d9d9d9;opacity:.5"></div>
<div class="a" style="left:628px;top:1px;width:2px;height:16px;background:#a2a2a2"></div>
<div class="a" style="left:697px;top:0;width:1px;height:664px;background:#cbcbcb"></div>
<div class="a" style="left:698px;top:0;width:1px;height:664px;background:#d9d9d9;opacity:.5"></div>
<div class="a" style="left:697px;top:1px;width:2px;height:16px;background:#a2a2a2"></div>
<div class="a" style="left:757px;top:0;width:1px;height:664px;background:#cbcbcb"></div>
<div class="a" style="left:758px;top:0;width:1px;height:664px;background:#d9d9d9;opacity:.5"></div>
<div class="a" style="left:757px;top:1px;width:2px;height:16px;background:#a2a2a2"></div>
<div class="a" style="left:824px;top:0;width:1px;height:664px;background:#cbcbcb"></div>
</div>
<div class="a" style="left:1079px;top:70px;width:14px;height:682px;background:#f0f0f0"></div>
<svg class="a" style="left:1082px;top:94px" width="8" height="7" viewBox="0 0 8 7"><path d="M0.8 5.8 L4 2 L7.2 5.8" fill="none" stroke="#606060" stroke-width="1.6"/></svg>
<div class="a" style="left:1079px;top:104px;width:13px;height:202px;background:#cdcdcd"></div>
<svg class="a" style="left:1082px;top:741px" width="8" height="7" viewBox="0 0 8 7"><path d="M0.8 1.2 L4 5 L7.2 1.2" fill="none" stroke="#606060" stroke-width="1.6"/></svg>
<div class="a" style="left:13px;top:752px;width:1080px;height:15px;background:#f0f0f0"></div>
<svg class="a" style="left:41px;top:755px" width="7" height="8" viewBox="0 0 7 8"><path d="M5.8 0.8 L2 4 L5.8 7.2" fill="none" stroke="#606060" stroke-width="1.6"/></svg>
<svg class="a" style="left:1067px;top:755px" width="7" height="8" viewBox="0 0 7 8"><path d="M1.2 0.8 L5 4 L1.2 7.2" fill="none" stroke="#606060" stroke-width="1.6"/></svg>
<div class="a" style="left:14px;top:85px;width:23px;height:677px;border:3px solid #00349c;border-radius:2px"></div>
<div class="btn" style="left:1104px;top:70px;width:26px;height:20px"></div>
<div class="btn dd" style="left:1132px;top:70px;width:9px;height:20px"></div>
<div class="btn" style="left:1148px;top:70px;width:26px;height:20px"></div>
<div class="btn dd" style="left:1176px;top:70px;width:9px;height:20px"></div>
<svg class="a" style="left:1111px;top:74px" width="12" height="11" viewBox="0 0 12 11"><rect x="0.5" y="0.5" width="10" height="10" fill="#fff" stroke="#888"/><path d="M2.5 5 L4.8 8 L10.5 1" fill="none" stroke="#1a4fc0" stroke-width="1.8"/></svg>
<svg class="a" style="left:1155px;top:74px" width="11" height="11" viewBox="0 0 11 11"><rect x="0.5" y="0.5" width="10" height="10" fill="#fafafa" stroke="#888"/></svg>
<div class="btn" style="left:1104px;top:96px;width:26px;height:19px"></div>
<div class="btn dd" style="left:1132px;top:96px;width:9px;height:19px"></div>
<div class="btn" style="left:1148px;top:96px;width:38px;height:19px"></div>
<svg class="a" style="left:1108px;top:97px" width="18" height="16" viewBox="0 0 18 16">
<defs><linearGradient id="gd" x1="0" y1="0" x2="0" y2="1"><stop offset="0" stop-color="#f4f8ff"/><stop offset="1" stop-color="#a9c3ea"/></linearGradient>
<linearGradient id="gx" x1="0" y1="0" x2="0" y2="1"><stop offset="0" stop-color="#6cc36c"/><stop offset="1" stop-color="#1f7f2a"/></linearGradient></defs>
<path d="M4.5 1.5 H13 L16 4.5 V14.5 H4.5 Z" fill="url(#gd)" stroke="#4f6fa3" stroke-width="0.9"/>
<path d="M6.5 11.5 H14" stroke="#7d98c8" stroke-width="0.8"/>
<rect x="1.5" y="2" width="9.5" height="8" rx="1.2" fill="url(#gx)"/>
<rect x="3.3" y="3.3" width="6" height="5.4" fill="#d6f0c8"/>
<path d="M4.3 4 L8.3 8 M8.3 4 L4.3 8" stroke="#1f6f24" stroke-width="1.2"/>
</svg>
<svg class="a" style="left:1159px;top:97px" width="16" height="16" viewBox="0 0 16 16">
<defs><linearGradient id="gh" x1="0" y1="0" x2="0" y2="1"><stop offset="0" stop-color="#f8e0a0"/><stop offset="1" stop-color="#c8962e"/></linearGradient></defs>
<rect x="1" y="1" width="12.5" height="13" rx="2" fill="#2f9df2"/>
<rect x="2.5" y="3.5" width="9.5" height="9" fill="#dfe3f4"/>
<rect x="2.5" y="5" width="2.5" height="7.5" fill="#f07848"/>
<path d="M6 5.5 C7 3.8 9 3.3 11 3.6 L14.5 4.2 C15.4 4.6 15.3 6.3 14.2 6.8 L12 8.2 C10 8.9 7.8 8.6 6.5 7.6 Z" fill="url(#gh)" stroke="#a8782a" stroke-width="0.5"/>
</svg>
<div class="btn" style="left:1104px;top:122px;width:38px;height:19px"></div>
<div class="btn" style="left:1148px;top:122px;width:38px;height:19px"></div>
<svg class="a" style="left:1116px;top:126px" width="14" height="11" viewBox="0 0 14 11">
<path d="M1.5 3.5 L6.5 7.5" stroke="#6e6e6e" stroke-width="2.6" stroke-linecap="round"/>
<path d="M4 1.8 L10.5 6.5" stroke="#8a8a8a" stroke-width="2.6" stroke-linecap="round"/>
<path d="M2 3.2 L6 6.5 M4.5 1.5 L9.8 5.5" stroke="#c8c8c8" stroke-width="0.7"/>
<circle cx="6.8" cy="8" r="2" fill="#a9d3fa" stroke="#6d8fb5" stroke-width="0.6"/>
<circle cx="11.2" cy="7" r="2" fill="#a9d3fa" stroke="#6d8fb5" stroke-width="0.6"/>
</svg>
<svg class="a" style="left:1159px;top:124px" width="15" height="15" viewBox="0 0 15 15">
<rect x="1" y="1" width="12.5" height="13" rx="2" fill="#2f9df2"/><rect x="2.5" y="3" width="9.5" height="9.5" fill="#eef0fb"/>
<path d="M5.2 12 V5.5" stroke="#e81818" stroke-width="1.6"/><path d="M3.4 6.4 L5.2 3.6 L7 6.4 Z" fill="#e81818"/>
<path d="M9.2 3.5 V10" stroke="#138a2e" stroke-width="1.6"/><path d="M7.4 9.1 L9.2 11.9 L11 9.1 Z" fill="#138a2e"/>
</svg>
<div class="btn" style="left:1104px;top:695px;width:82px;height:32px"></div>
<svg class="a" style="left:1116px;top:704px" width="13" height="11" viewBox="0 0 13 11">
<defs><linearGradient id="gr" x1="0" y1="0" x2="0" y2="1"><stop offset="0" stop-color="#ff9a9a"/><stop offset="0.5" stop-color="#f03a3a"/><stop offset="1" stop-color="#c81818"/></linearGradient></defs>
<path d="M1.2 6.2 L6.5 1.2 V3.9 H12.8 V8.4 H6.5 V11 Z" fill="#000" opacity="0.15"/>
<path d="M0.5 5.5 L6 0.5 V3.3 H12.2 V7.7 H6 V10.5 Z" fill="url(#gr)"/>
</svg>
<div class="a" style="left:1133px;top:699px;font-size:9.8px;line-height:12px;color:#1a1a1a;white-space:nowrap"><u>V</u>oltar<br>(page up)</div>
<div class="btn" style="left:1104px;top:733px;width:82px;height:32px"></div>
<div class="a" style="left:1109.5px;top:738px;font-size:9.8px;line-height:12px;color:#1a1a1a;white-space:nowrap"><u>A</u>vançar<br>(page down)</div>
<svg class="a" style="left:1167px;top:742px" width="13" height="11" viewBox="0 0 13 11">
<defs><linearGradient id="gg" x1="0" y1="0" x2="0" y2="1"><stop offset="0" stop-color="#a8f0a0"/><stop offset="0.5" stop-color="#44c844"/><stop offset="1" stop-color="#1f9a22"/></linearGradient></defs>
<path d="M12.9 6.2 L7.6 1.2 V3.9 H1.2 V8.4 H7.6 V11 Z" fill="#000" opacity="0.15"/>
<path d="M12.5 5.5 L7 0.5 V3.3 H0.8 V7.7 H7 V10.5 Z" fill="url(#gg)"/>
</svg>
<div class="a" style="left:11px;top:769px;width:1185px;height:1px;background:#a0a0a0"></div>
<div class="a" style="left:11px;top:770px;width:1185px;height:1px;background:#e4e4e4"></div>
<div class="a" style="left:11px;top:771px;width:1185px;height:34px;background:#ffffe5"></div>
<div class="a" style="left:13px;top:774px;font-size:10px;letter-spacing:-0.12px;line-height:12px;color:#1a1a1a;white-space:nowrap">Total de itens: 124 Marcados: 124 Desmarcados: 0 Total de Vlr.pagar : 29.078,49 Total de Vlr.pag.prop. : 29.078,49 Total de Vlr.receber : 101.992,30 Total de Vlr.rec.prop. : 101.992,30</div>
</body></html>
